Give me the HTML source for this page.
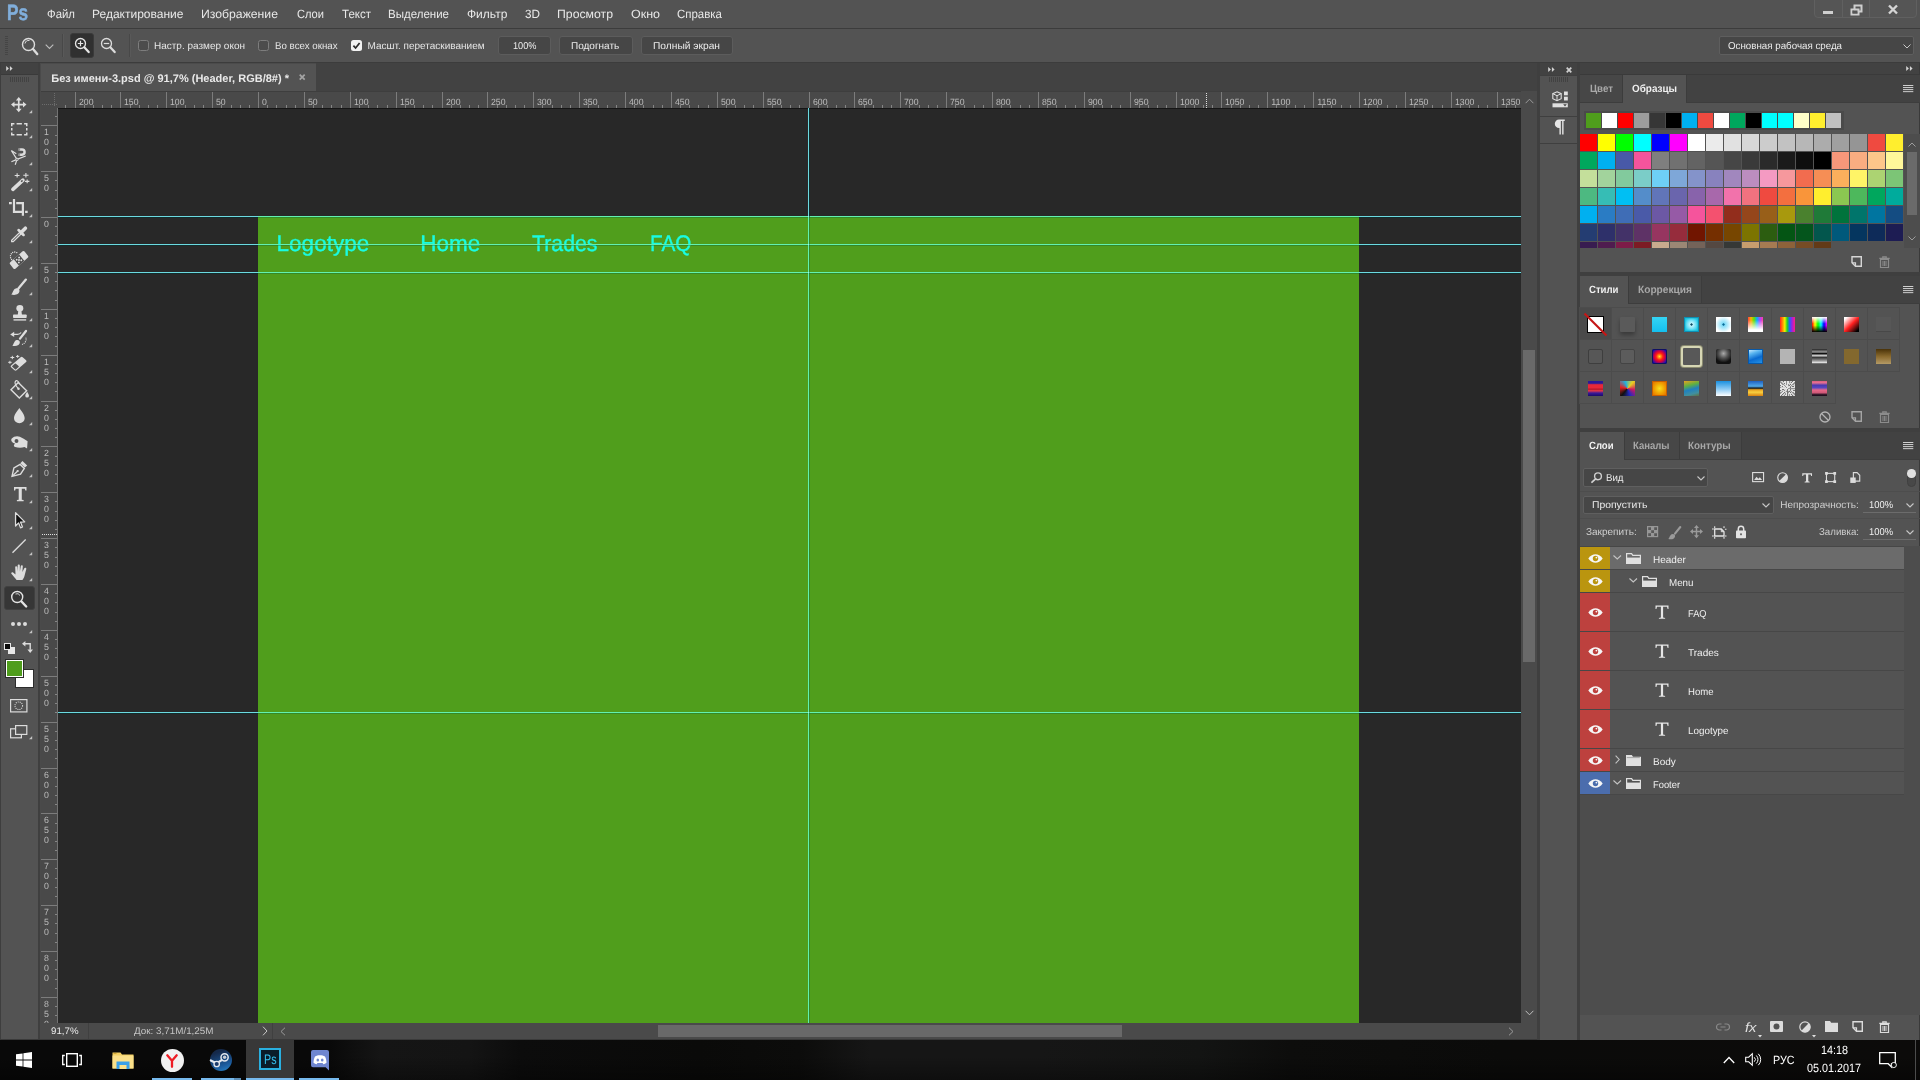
<!DOCTYPE html>
<html lang="ru">
<head>
<meta charset="utf-8">
<title>Adobe Photoshop</title>
<style>
*{box-sizing:border-box;margin:0;padding:0}
html,body{width:1920px;height:1080px;overflow:hidden;background:#535353;font-family:"Liberation Sans",sans-serif;font-size:12px;color:#e4e4e4}
.a{position:absolute}
.t{position:absolute;white-space:nowrap;line-height:1;text-rendering:geometricPrecision}
svg{position:absolute;overflow:visible}
</style>
</head>
<body>
<div id="app" style="position:absolute;left:0;top:0;width:1920px;height:1080px;overflow:hidden;will-change:transform">
<div class="a" style="left:0px;top:0px;width:1920px;height:28px;background:#535353;"></div>
<div class="t" style="left:6.80px;top:2px;font-size:22px;color:#80aedb;font-weight:bold;transform:scaleX(0.7804);transform-origin:0 0;-webkit-text-stroke:0.5px #80aedb;">Ps</div>
<div class="t" style="left:47.00px;top:8px;font-size:12px;color:#e8e8e8;transform:scaleX(0.9491);transform-origin:0 0;">Файл</div>
<div class="t" style="left:92.00px;top:8px;font-size:12px;color:#e8e8e8;">Редактирование</div>
<div class="t" style="left:201.00px;top:8px;font-size:12px;color:#e8e8e8;transform:scaleX(1.0186);transform-origin:0 0;">Изображение</div>
<div class="t" style="left:297.00px;top:8px;font-size:12px;color:#e8e8e8;transform:scaleX(0.9253);transform-origin:0 0;">Слои</div>
<div class="t" style="left:342.00px;top:8px;font-size:12px;color:#e8e8e8;transform:scaleX(0.9599);transform-origin:0 0;">Текст</div>
<div class="t" style="left:388.00px;top:8px;font-size:12px;color:#e8e8e8;transform:scaleX(0.9593);transform-origin:0 0;">Выделение</div>
<div class="t" style="left:467.00px;top:8px;font-size:12px;color:#e8e8e8;">Фильтр</div>
<div class="t" style="left:525.00px;top:8px;font-size:12px;color:#e8e8e8;transform:scaleX(0.9778);transform-origin:0 0;">3D</div>
<div class="t" style="left:557.00px;top:8px;font-size:12px;color:#e8e8e8;transform:scaleX(1.0218);transform-origin:0 0;">Просмотр</div>
<div class="t" style="left:631.00px;top:8px;font-size:12px;color:#e8e8e8;transform:scaleX(1.0400);transform-origin:0 0;">Окно</div>
<div class="t" style="left:677.00px;top:8px;font-size:12px;color:#e8e8e8;transform:scaleX(0.9559);transform-origin:0 0;">Справка</div>
<div class="a" style="left:1814px;top:-1px;width:103px;height:19px;border:1px solid #606060;border-radius:0 0 4px 4px;background:#555"></div>
<div class="a" style="left:1842px;top:0px;width:1px;height:17px;background:#606060;"></div>
<div class="a" style="left:1869px;top:0px;width:1px;height:17px;background:#606060;"></div>
<div class="a" style="left:1823px;top:11px;width:10px;height:3px;background:#cfcfcf;"></div>
<svg style="left:1850px;top:4px;" width="13" height="12" viewBox="0 0 13 12"><path d="M4.5 1.5h7v6h-7z M1.5 5.5h7v5h-7z" fill="none" stroke="#cfcfcf" stroke-width="2"/><rect x="2.5" y="6.5" width="5" height="3" fill="#555"/></svg>
<svg style="left:1888px;top:5px;" width="10" height="9" viewBox="0 0 10 9"><path d="M1 0.5L9 8.5M9 0.5L1 8.5" stroke="#d4d4d4" stroke-width="2.4"/></svg>
<div class="a" style="left:0px;top:28px;width:1920px;height:1px;background:#3c3c3c;"></div>
<div class="a" style="left:0px;top:29px;width:1920px;height:33px;background:#535353;"></div>
<div class="a" style="left:0px;top:62px;width:1920px;height:1px;background:#3c3c3c;"></div>
<div class="a" style="left:5px;top:36px;width:3px;height:20px;background:repeating-linear-gradient(#454545 0 1px,transparent 1px 2px)"></div>
<svg style="left:20.3px;top:35px;" width="20" height="22" viewBox="0 0 20 22"><circle cx="8.5" cy="9.5" r="6" fill="none" stroke="#dcdcdc" stroke-width="1.4"/><path d="M5 8.5a4 4 0 0 1 4.5-3" fill="none" stroke="#dcdcdc" stroke-width="1"/><path d="M13 14l4.2 5" stroke="#dcdcdc" stroke-width="2.4" stroke-linecap="round"/></svg>
<svg style="left:45px;top:44px;" width="9" height="6" viewBox="0 0 9 6"><path d="M0.7 0.7L4.5 4.5L8.3 0.7" fill="none" stroke="#bdbdbd" stroke-width="1.1"/></svg>
<div class="a" style="left:62px;top:34px;width:1px;height:23px;background:#484848;"></div>
<div class="a" style="left:63px;top:34px;width:1px;height:23px;background:#595959;"></div>
<div class="a" style="left:70px;top:33px;width:24px;height:25px;background:#303030;border-radius:3px;border:1px solid #3a3a3a"></div>
<svg style="left:74.3px;top:37.2px;" width="18" height="18" viewBox="0 0 18 18"><circle cx="6.5" cy="6.5" r="5" fill="none" stroke="#e6e6e6" stroke-width="1.3"/><path d="M3.8 6.5h5.4M6.5 3.8v5.4" stroke="#e6e6e6" stroke-width="1.2"/><path d="M10.5 10.5l4.2 4.6" stroke="#e6e6e6" stroke-width="2.2" stroke-linecap="round"/></svg>
<svg style="left:100.3px;top:37.2px;" width="18" height="18" viewBox="0 0 18 18"><circle cx="6.5" cy="6.5" r="5" fill="none" stroke="#dcdcdc" stroke-width="1.3"/><path d="M3.8 6.5h5.4" stroke="#dcdcdc" stroke-width="1.2"/><path d="M10.5 10.5l4.2 4.6" stroke="#dcdcdc" stroke-width="2.2" stroke-linecap="round"/></svg>
<div class="a" style="left:129px;top:34px;width:1px;height:23px;background:#484848;"></div>
<div class="a" style="left:130px;top:34px;width:1px;height:23px;background:#595959;"></div>
<div class="a" style="left:138px;top:39.5px;width:11px;height:11px;border:1px solid #7d7d7d;border-radius:2.5px;background:#4c4c4c"></div>
<div class="a" style="left:258px;top:39.5px;width:11px;height:11px;border:1px solid #7d7d7d;border-radius:2.5px;background:#4c4c4c"></div>
<div class="a" style="left:351px;top:39.5px;width:11px;height:11px;border-radius:2.5px;background:#f2f2f2"></div>
<svg style="left:351px;top:39.5px;" width="11" height="11" viewBox="0 0 11 11"><path d="M2.4 5.6l2.2 2.4l4-5" fill="none" stroke="#2a2a2a" stroke-width="1.7"/></svg>
<div class="t" style="left:154.00px;top:42px;font-size:10px;color:#e6e6e6;">Настр. размер окон</div>
<div class="t" style="left:274.50px;top:42px;font-size:10px;color:#e6e6e6;transform:scaleX(0.9712);transform-origin:0 0;">Во всех окнах</div>
<div class="t" style="left:367.50px;top:42px;font-size:10px;color:#e6e6e6;">Масшт. перетаскиванием</div>
<div class="a" style="left:498px;top:36px;width:53px;height:19px;background:#464646;border:1px solid #5c5c5c;border-radius:3px"></div>
<div class="t" style="left:513.00px;top:42px;font-size:10px;color:#ececec;transform:scaleX(0.9188);transform-origin:0 0;">100%</div>
<div class="a" style="left:559px;top:36px;width:74px;height:19px;background:#464646;border:1px solid #5c5c5c;border-radius:3px"></div>
<div class="t" style="left:571.00px;top:42px;font-size:10px;color:#ececec;">Подогнать</div>
<div class="a" style="left:641px;top:36px;width:92px;height:19px;background:#464646;border:1px solid #5c5c5c;border-radius:3px"></div>
<div class="t" style="left:653.00px;top:42px;font-size:10px;color:#ececec;transform:scaleX(1.0219);transform-origin:0 0;">Полный экран</div>
<div class="a" style="left:1719px;top:36px;width:195px;height:19px;background:#464646;border:1px solid #5e5e5e;border-radius:2px"></div>
<div class="t" style="left:1728.00px;top:42px;font-size:10px;color:#ececec;transform:scaleX(0.9751);transform-origin:0 0;">Основная рабочая среда</div>
<svg style="left:1902.5px;top:44px;" width="8" height="5" viewBox="0 0 8 5"><path d="M0.5 0.5L4 4L7.5 0.5" fill="none" stroke="#c8c8c8" stroke-width="1"/></svg>
<div class="a" style="left:38px;top:63px;width:1499px;height:28px;background:#424242;"></div>
<div class="a" style="left:41px;top:64px;width:275px;height:27px;background:#535353;"></div>
<div class="a" style="left:41px;top:63px;width:275px;height:1px;background:#4b4b4b;"></div>
<div class="t" style="left:51.30px;top:74px;font-size:11px;color:#e9e9e9;font-weight:bold;">Без имени-3.psd @ 91,7% (Header, RGB/8#) *</div>
<svg style="left:299px;top:74.2px;" width="6.4" height="6.4" viewBox="0 0 6.4 6.4"><path d="M0.7 0.7L5.7 5.7M5.7 0.7L0.7 5.7" stroke="#a4a4a4" stroke-width="1.7"/></svg>
<div class="a" style="left:0px;top:63px;width:38px;height:977px;background:#535353;"></div>
<div class="a" style="left:0px;top:63px;width:38px;height:11px;background:#424242;"></div>
<div class="a" style="left:0px;top:74px;width:38px;height:1px;background:#3a3a3a;"></div>
<div class="a" style="left:0px;top:63px;width:1px;height:977px;background:#3e3e3e;"></div>
<svg style="left:5.8px;top:66.2px;" width="7" height="5" viewBox="0 0 7 5"><path d="M0.2 0.1L2.9 2.5L0.2 4.9zM3.9 0.1L6.600 2.5L3.9 4.9z" fill="#d4d4d4"/></svg>
<div class="a" style="left:10px;top:77px;width:20px;height:5px;background:repeating-linear-gradient(90deg,#424242 0 1px,transparent 1px 2px)"></div>
<div class="a" style="left:38px;top:63px;width:3px;height:977px;background:#3f3f3f;"></div>
<div class="a" style="left:40px;top:63px;width:1px;height:977px;background:#4a4a4a;"></div>
<svg style="left:11px;top:97px" width="15.5" height="15.2" viewBox="0 0 15.5 15.2" preserveAspectRatio="none"><path d="M7.75 2.6v10M2.7 7.6h10.1" fill="none" stroke="#dddddd" vector-effect="non-scaling-stroke" stroke-width="1.7"/><path d="M7.75 0l2.9 3.5h-5.8zM7.75 15.2l2.9-3.5h-5.8zM0 7.6l3.5-2.9v5.8zM15.5 7.6l-3.5-2.9v5.8z" fill="#dddddd"/></svg>
<svg style="left:29.2px;top:110.1px;" width="3.2" height="3.2" viewBox="0 0 3.2 3.2"><path d="M3.2 0V3.2H0z" fill="#c4c4c4"/></svg>
<svg style="left:11px;top:123px" width="16.5" height="12.6" viewBox="0 0 16.5 12.6" preserveAspectRatio="none"><path d="M0.75 3.2V0.75H3.4M5.6 0.75H10.9M13.1 0.75H15.75V3.2M15.75 5.1V7.5M15.75 9.4V11.85H13.1M10.9 11.85H5.6M3.4 11.85H0.75V9.4M0.75 7.5V5.1" fill="none" stroke="#dddddd" vector-effect="non-scaling-stroke" stroke-width="1.5"/></svg>
<svg style="left:29.2px;top:135.1px;" width="3.2" height="3.2" viewBox="0 0 3.2 3.2"><path d="M3.2 0V3.2H0z" fill="#c4c4c4"/></svg>
<svg style="left:11px;top:148px" width="16" height="17" viewBox="0 0 16 17" preserveAspectRatio="none"><path d="M0.3 2.5l5.7 8.9M0.3 2.5l5 3.2M6 11.4l-5.600 2.4M6 11.4l-1.800 5.400M6 11.4l8.700-3.400" fill="none" stroke="#dddddd" vector-effect="non-scaling-stroke" stroke-width="1.200"/><rect x="5" y="10.400" width="2" height="2" fill="#535353" stroke="#dddddd" vector-effect="non-scaling-stroke" stroke-width="0.800"/><path d="M11 0.300h-3.400v2.400h3.400a1.400 1.400 0 0 1 0 2.800h-3.400v2.400h3.400a3.800 3.800 0 0 0 0-7.600z" fill="#dddddd"/><path d="M8.600 0.300v2.400M8.600 5.500v2.400" stroke="#535353" vector-effect="non-scaling-stroke" stroke-width="0.600"/></svg>
<svg style="left:29.2px;top:161.6px;" width="3.2" height="3.2" viewBox="0 0 3.2 3.2"><path d="M3.2 0V3.2H0z" fill="#c4c4c4"/></svg>
<svg style="left:11px;top:173px" width="18.4" height="18" viewBox="2.7 0.8 17.4 19.5" preserveAspectRatio="none"><path d="M4.500 18.500l9.500-10" stroke="#dddddd" vector-effect="non-scaling-stroke" stroke-width="3.600" stroke-linecap="round"/><path d="M12.300 10.200l1.300-1.400" stroke="#535353" vector-effect="non-scaling-stroke" stroke-width="1.400"/><path d="M8.500 1.200v4.600M6.200 3.500h4.600M16.800 0.800v5M14.300 3.300h5M18 7.800v4.200M15.900 9.900h4.200" fill="none" stroke="#dddddd" vector-effect="non-scaling-stroke" stroke-width="1.100"/></svg>
<svg style="left:29.2px;top:187.6px;" width="3.2" height="3.2" viewBox="0 0 3.2 3.2"><path d="M3.2 0V3.2H0z" fill="#c4c4c4"/></svg>
<svg style="left:9px;top:198.9px" width="18.7" height="16.7" viewBox="0 0 18.7 16.7" preserveAspectRatio="none"><path d="M3.9 0h2.2v14.1h-2.2zM3.9 11.8h11.1v2.3h-11.1zM16.1 11.8h2.6v2.3h-2.6zM0 3h2.8v2.2h-2.8zM7.2 3h7.8v2.2h-7.8zM12.8 3h2.2v13.7h-2.2z" fill="#dddddd"/></svg>
<svg style="left:29.2px;top:213.6px;" width="3.2" height="3.2" viewBox="0 0 3.2 3.2"><path d="M3.2 0V3.2H0z" fill="#c4c4c4"/></svg>
<svg style="left:11px;top:225.6px" width="16.2" height="16.4" viewBox="3.5 1.9 16.1 16.6" preserveAspectRatio="none"><path d="M4.2 17.8l1.5 0l8-8l-1.500-1.500l-8 8z" fill="none" stroke="#dddddd" vector-effect="non-scaling-stroke" stroke-width="1.300"/><path d="M11 6l5 5" stroke="#dddddd" vector-effect="non-scaling-stroke" stroke-width="2.600" stroke-linecap="round"/><path d="M13.500 8.500l4.300-4.300" stroke="#dddddd" vector-effect="non-scaling-stroke" stroke-width="3.600" stroke-linecap="round"/></svg>
<svg style="left:29.2px;top:239.6px;" width="3.2" height="3.2" viewBox="0 0 3.2 3.2"><path d="M3.2 0V3.2H0z" fill="#c4c4c4"/></svg>
<svg style="left:10px;top:251px" width="18" height="18" viewBox="1.5 2 19 18" preserveAspectRatio="none"><g transform="rotate(-40 11 11)"><rect x="1" y="6.800" width="20" height="8.400" rx="1.500" fill="#dddddd"/><rect x="7.300" y="6.800" width="7.400" height="8.400" fill="#4a4a4a"/><circle cx="9.300" cy="9.200" r="1" fill="#dddddd"/><circle cx="12.700" cy="9.200" r="1" fill="#dddddd"/><circle cx="9.300" cy="12.800" r="1" fill="#dddddd"/><circle cx="12.700" cy="12.800" r="1" fill="#dddddd"/><circle cx="11" cy="11" r="1" fill="#dddddd"/></g><path d="M3.200 10.500a4.300 4.300 0 0 1 6.300-6.200" fill="none" stroke="#dddddd" vector-effect="non-scaling-stroke" stroke-width="1.300" stroke-dasharray="0.100 1.900" stroke-linecap="round"/></svg>
<svg style="left:29.2px;top:265.6px;" width="3.2" height="3.2" viewBox="0 0 3.2 3.2"><path d="M3.2 0V3.2H0z" fill="#c4c4c4"/></svg>
<svg style="left:11px;top:278.5px" width="15.3" height="16" viewBox="0 0 15.3 16" preserveAspectRatio="none"><path d="M14.900 0.600L7.400 9.500" stroke="#dddddd" vector-effect="non-scaling-stroke" stroke-width="2.300" stroke-linecap="round"/><path d="M0.300 15.500C1.500 14.500 1.800 12.500 3 10.800C4.200 9.200 6.500 8.800 7.800 10C9 11.300 8.600 13.500 7 14.800C5 16.200 2 16 0.300 15.500z" fill="#dddddd"/></svg>
<svg style="left:29.2px;top:291.6px;" width="3.2" height="3.2" viewBox="0 0 3.2 3.2"><path d="M3.2 0V3.2H0z" fill="#c4c4c4"/></svg>
<svg style="left:12.5px;top:305px" width="13.7" height="15.6" viewBox="4.5 2.7 13 16" preserveAspectRatio="none"><circle cx="11" cy="6" r="3.3" fill="#dddddd"/><path d="M9.600 8h2.800l.6 5h-4z" fill="#dddddd"/><rect x="4.500" y="12.500" width="13" height="3.500" rx="0.800" fill="#dddddd"/><rect x="5" y="17.300" width="12" height="1.400" fill="#dddddd"/></svg>
<svg style="left:29.2px;top:317.6px;" width="3.2" height="3.2" viewBox="0 0 3.2 3.2"><path d="M3.2 0V3.2H0z" fill="#c4c4c4"/></svg>
<svg style="left:10px;top:330px" width="17.2" height="16.3" viewBox="0 0 17.2 16.3" preserveAspectRatio="none"><path d="M16 1L10 8.600" stroke="#dddddd" vector-effect="non-scaling-stroke" stroke-width="2.300" stroke-linecap="round"/><path d="M2.300 15.700C3.400 14.800 3.600 13 4.700 11.500C5.800 10 8 9.600 9.200 10.800C10.400 12 9.900 14 8.400 15.100C6.600 16.300 3.900 16.200 2.300 15.700z" fill="#dddddd"/><path d="M3 4.300h4.500c1.800 0 2.800-.7 3.600-1.800" fill="none" stroke="#dddddd" vector-effect="non-scaling-stroke" stroke-width="1.200"/><path d="M0.200 4.600l4-2.900v5.400z" fill="#dddddd"/><path d="M12.500 14.300a5.500 5.500 0 0 0 3.500-6.300" fill="none" stroke="#dddddd" vector-effect="non-scaling-stroke" stroke-width="1.200" stroke-dasharray="0.100 1.800" stroke-linecap="round"/></svg>
<svg style="left:29.2px;top:343.6px;" width="3.2" height="3.2" viewBox="0 0 3.2 3.2"><path d="M3.2 0V3.2H0z" fill="#c4c4c4"/></svg>
<svg style="left:8.2px;top:355.4px" width="18.8" height="15.8" viewBox="1 0.5 19.5 19" preserveAspectRatio="none"><g transform="rotate(-45 12 11)"><rect x="3.500" y="7" width="17" height="8" rx="1.500" fill="#dddddd"/><rect x="4.700" y="8.200" width="5.300" height="5.600" rx="0.800" fill="#535353"/></g><path d="M5.500 1.500v4M3.500 3.500h4M11 0.500v3.400M9.300 2.200h3.400M3 7.500v3.600M1.200 9.300h3.600" fill="none" stroke="#dddddd" vector-effect="non-scaling-stroke" stroke-width="1"/></svg>
<svg style="left:29.2px;top:369.6px;" width="3.2" height="3.2" viewBox="0 0 3.2 3.2"><path d="M3.2 0V3.2H0z" fill="#c4c4c4"/></svg>
<svg style="left:11px;top:381px" width="18" height="17" viewBox="3 2 17.3 16.5" preserveAspectRatio="none"><path d="M10 3.500l8 8l-7 7l-8-8z" fill="none" stroke="#dddddd" vector-effect="non-scaling-stroke" stroke-width="1.400"/><path d="M10 9.500c-2.500-3-4-6-2.500-7.500c1.200-1 2.800.5 3.500 2.500" fill="none" stroke="#dddddd" vector-effect="non-scaling-stroke" stroke-width="1.200"/><circle cx="10.200" cy="9.500" r="1.200" fill="#dddddd"/><path d="M18.500 12.500c1 1.800 1.800 2.800 1.800 3.800a1.800 1.800 0 0 1-3.600 0c0-1 .8-2 1.800-3.800z" fill="#dddddd"/></svg>
<svg style="left:29.2px;top:395.6px;" width="3.2" height="3.2" viewBox="0 0 3.2 3.2"><path d="M3.2 0V3.2H0z" fill="#c4c4c4"/></svg>
<svg style="left:13.7px;top:408px" width="10.7" height="15.2" viewBox="6 2.5 10 15.3" preserveAspectRatio="none"><path d="M11 2.500c2.500 4 5 6.800 5 10.300a5 5 0 0 1-10 0c0-3.500 2.500-6.300 5-10.300z" fill="#dddddd"/></svg>
<svg style="left:29.2px;top:421.6px;" width="3.2" height="3.2" viewBox="0 0 3.2 3.2"><path d="M3.2 0V3.2H0z" fill="#c4c4c4"/></svg>
<svg style="left:10.6px;top:435.6px" width="16.6" height="12.6" viewBox="2.5 3.8 16 12.2" preserveAspectRatio="none"><path d="M3 6.500c2-2.500 5.500-3 8-2c2.500 1 5 2.500 7.500 4.500l-.5 7l-2.500-1.500c-2.500.8-6 .8-9 0c-1.800-.8-1.300-2.800 0-3.300c-2.300-.5-4.500-2.500-3.500-4.700z" fill="#dddddd"/><circle cx="7.800" cy="8.600" r="1.900" fill="#535353"/></svg>
<svg style="left:29.2px;top:447.6px;" width="3.2" height="3.2" viewBox="0 0 3.2 3.2"><path d="M3.2 0V3.2H0z" fill="#c4c4c4"/></svg>
<svg style="left:12px;top:460.6px" width="15.2" height="15.4" viewBox="4 2.2 16 17.3" preserveAspectRatio="none"><path d="M4 19.500l2-9.500l6.500-4l4.500 4.500l-4 6.500z" fill="none" stroke="#dddddd" vector-effect="non-scaling-stroke" stroke-width="1.400"/><path d="M4.500 19l5-5" fill="none" stroke="#dddddd" vector-effect="non-scaling-stroke" stroke-width="1.200"/><circle cx="10" cy="13.500" r="1.200" fill="#dddddd"/><path d="M12.800 4.600l2.200-2.400l5 5l-2.400 2.200z" fill="#dddddd"/></svg>
<svg style="left:29.2px;top:473.6px;" width="3.2" height="3.2" viewBox="0 0 3.2 3.2"><path d="M3.2 0V3.2H0z" fill="#c4c4c4"/></svg>
<svg style="left:13.7px;top:487px" width="12.5" height="14.2" viewBox="4.5 4 13 14" preserveAspectRatio="none"><path d="M4.500 4h13v3.500h-1.200l-.5-1.700h-3.200v10.700l1.900.4v1.100h-7v-1.100l1.900-.4v-10.700h-3.200l-.5 1.700h-1.200z" fill="#dddddd"/></svg>
<svg style="left:29.2px;top:499.6px;" width="3.2" height="3.2" viewBox="0 0 3.2 3.2"><path d="M3.2 0V3.2H0z" fill="#c4c4c4"/></svg>
<svg style="left:14.7px;top:512px" width="10.3" height="16.5" viewBox="6.3 2.3 12.4 17.9" preserveAspectRatio="none"><path d="M7 3v14.500l3.600-3.400l2.400 5.400l2.300-1l-2.400-5.300l5.100-.2z" fill="#111" stroke="#dddddd" vector-effect="non-scaling-stroke" stroke-width="1.300" stroke-linejoin="round"/></svg>
<svg style="left:29.2px;top:525.6px;" width="3.2" height="3.2" viewBox="0 0 3.2 3.2"><path d="M3.2 0V3.2H0z" fill="#c4c4c4"/></svg>
<svg style="left:12px;top:538.7px" width="14.2" height="14.3" viewBox="4 4 14 14.5" preserveAspectRatio="none"><path d="M4.500 18l13-13.500" fill="none" stroke="#dddddd" vector-effect="non-scaling-stroke" stroke-width="1.300"/></svg>
<svg style="left:29.2px;top:551.6px;" width="3.2" height="3.2" viewBox="0 0 3.2 3.2"><path d="M3.2 0V3.2H0z" fill="#c4c4c4"/></svg>
<svg style="left:11px;top:564px" width="16.5" height="16" viewBox="0 0 16.5 16" preserveAspectRatio="none"><path d="M5.600 16C4.200 14.200 2 11.600 0.400 9.700C-0.300 8.800 1 7.600 2.100 8.500L4.500 10.500L4.200 3.200C4.200 1.900 6.100 1.800 6.200 3.100L6.500 7.500L6.700 1.500C6.800 0.200 8.800 0.200 8.800 1.500L8.900 7.500L9.800 2C10 0.800 11.900 1 11.800 2.300L11.400 8L13.300 4.300C13.800 3.200 15.600 3.800 15.300 5L13.600 11.500C13.100 13.500 12.400 14.800 11.400 16z" fill="#dddddd"/></svg>
<svg style="left:29.2px;top:577.6px;" width="3.2" height="3.2" viewBox="0 0 3.2 3.2"><path d="M3.2 0V3.2H0z" fill="#c4c4c4"/></svg>
<div class="a" style="left:4px;top:586px;width:30.500px;height:23.500px;background:#363636;border-radius:3px;border:1px solid #404040"></div>
<svg style="left:9px;top:589px;" width="20" height="20" viewBox="0 0 20 20"><circle cx="8.200" cy="8" r="5.500" fill="none" stroke="#e4e4e4" stroke-width="1.400"/><path d="M6.500 5a3.500 3.500 0 0 1 4.500 1.500" fill="none" stroke="#e4e4e4" stroke-width="0.900"/><path d="M12.500 12.500l4.700 5" stroke="#e4e4e4" stroke-width="2.400" stroke-linecap="round"/></svg>
<div class="a" style="left:10.8px;top:622px;width:4.400px;height:4.400px;border-radius:50%;background:#dcdcdc"></div>
<div class="a" style="left:16.8px;top:622px;width:4.400px;height:4.400px;border-radius:50%;background:#dcdcdc"></div>
<div class="a" style="left:22.8px;top:622px;width:4.400px;height:4.400px;border-radius:50%;background:#dcdcdc"></div>
<svg style="left:29.2px;top:629.6px;" width="3.2" height="3.2" viewBox="0 0 3.2 3.2"><path d="M3.2 0V3.2H0z" fill="#c4c4c4"/></svg>
<div class="a" style="left:8px;top:647px;width:6.5px;height:6.5px;background:#e8e8e8;"></div>
<div class="a" style="left:4px;top:643px;width:7px;height:7px;background:#0a0a0a;border:1px solid #e8e8e8"></div>
<svg style="left:22px;top:641px;" width="11" height="12" viewBox="0 0 11 12"><path d="M3 2.800h5.200v6" fill="none" stroke="#dcdcdc" stroke-width="1.400"/><path d="M0 2.800l3.400-2.800v5.600zM8.200 12l-2.800-3.600h5.600z" fill="#dcdcdc"/></svg>
<div class="a" style="left:14.5px;top:668.5px;width:19px;height:19px;background:#ffffff;border:1px solid #2c2c2c"></div>
<div class="a" style="left:4.5px;top:658.5px;width:19px;height:19px;background:#4f9d1c;border:1px solid #2c2c2c;box-shadow:inset 0 0 0 1px #fff"></div>
<svg style="left:10px;top:699px;" width="17.5" height="13.5" viewBox="0 0 17.5 13.5"><rect x="0.600" y="0.600" width="16.300" height="12.300" fill="none" stroke="#dcdcdc" stroke-width="1.200"/><circle cx="8.750" cy="6.750" r="3.800" fill="none" stroke="#dcdcdc" stroke-width="1.100" stroke-dasharray="1 1.050"/></svg>
<svg style="left:10px;top:725px;" width="17.5" height="13.5" viewBox="0 0 17.5 13.5"><rect x="0.600" y="3.800" width="10.800" height="9" fill="none" stroke="#dcdcdc" stroke-width="1.200"/><rect x="5.600" y="0.600" width="11.200" height="8.800" fill="#535353" stroke="#dcdcdc" stroke-width="1.200"/></svg>
<svg style="left:29.2px;top:736px;" width="3.2" height="3.2" viewBox="0 0 3.2 3.2"><path d="M3.2 0V3.2H0z" fill="#c4c4c4"/></svg>
<div class="a" style="left:41px;top:91px;width:1496px;height:17px;background:#494949;"></div>
<div class="a" style="left:0;top:0;width:1521px;height:108px;overflow:hidden"><div class="a" style="left:65px;top:105px;width:1px;height:3px;background:#858585;"></div><div class="a" style="left:75px;top:92px;width:1px;height:16px;background:#7c7c7c;"></div><div class="a" style="left:84px;top:105px;width:1px;height:3px;background:#858585;"></div><div class="a" style="left:93px;top:105px;width:1px;height:3px;background:#858585;"></div><div class="a" style="left:102px;top:105px;width:1px;height:3px;background:#858585;"></div><div class="a" style="left:111px;top:105px;width:1px;height:3px;background:#858585;"></div><div class="a" style="left:120px;top:92px;width:1px;height:16px;background:#7c7c7c;"></div><div class="a" style="left:130px;top:105px;width:1px;height:3px;background:#858585;"></div><div class="a" style="left:139px;top:105px;width:1px;height:3px;background:#858585;"></div><div class="a" style="left:148px;top:105px;width:1px;height:3px;background:#858585;"></div><div class="a" style="left:157px;top:105px;width:1px;height:3px;background:#858585;"></div><div class="a" style="left:166px;top:92px;width:1px;height:16px;background:#7c7c7c;"></div><div class="a" style="left:176px;top:105px;width:1px;height:3px;background:#858585;"></div><div class="a" style="left:185px;top:105px;width:1px;height:3px;background:#858585;"></div><div class="a" style="left:194px;top:105px;width:1px;height:3px;background:#858585;"></div><div class="a" style="left:203px;top:105px;width:1px;height:3px;background:#858585;"></div><div class="a" style="left:212px;top:92px;width:1px;height:16px;background:#7c7c7c;"></div><div class="a" style="left:221px;top:105px;width:1px;height:3px;background:#858585;"></div><div class="a" style="left:231px;top:105px;width:1px;height:3px;background:#858585;"></div><div class="a" style="left:240px;top:105px;width:1px;height:3px;background:#858585;"></div><div class="a" style="left:249px;top:105px;width:1px;height:3px;background:#858585;"></div><div class="a" style="left:258px;top:92px;width:1px;height:16px;background:#7c7c7c;"></div><div class="a" style="left:267px;top:105px;width:1px;height:3px;background:#858585;"></div><div class="a" style="left:276px;top:105px;width:1px;height:3px;background:#858585;"></div><div class="a" style="left:286px;top:105px;width:1px;height:3px;background:#858585;"></div><div class="a" style="left:295px;top:105px;width:1px;height:3px;background:#858585;"></div><div class="a" style="left:304px;top:92px;width:1px;height:16px;background:#7c7c7c;"></div><div class="a" style="left:313px;top:105px;width:1px;height:3px;background:#858585;"></div><div class="a" style="left:322px;top:105px;width:1px;height:3px;background:#858585;"></div><div class="a" style="left:331px;top:105px;width:1px;height:3px;background:#858585;"></div><div class="a" style="left:341px;top:105px;width:1px;height:3px;background:#858585;"></div><div class="a" style="left:350px;top:92px;width:1px;height:16px;background:#7c7c7c;"></div><div class="a" style="left:359px;top:105px;width:1px;height:3px;background:#858585;"></div><div class="a" style="left:368px;top:105px;width:1px;height:3px;background:#858585;"></div><div class="a" style="left:377px;top:105px;width:1px;height:3px;background:#858585;"></div><div class="a" style="left:387px;top:105px;width:1px;height:3px;background:#858585;"></div><div class="a" style="left:396px;top:92px;width:1px;height:16px;background:#7c7c7c;"></div><div class="a" style="left:405px;top:105px;width:1px;height:3px;background:#858585;"></div><div class="a" style="left:414px;top:105px;width:1px;height:3px;background:#858585;"></div><div class="a" style="left:423px;top:105px;width:1px;height:3px;background:#858585;"></div><div class="a" style="left:432px;top:105px;width:1px;height:3px;background:#858585;"></div><div class="a" style="left:442px;top:92px;width:1px;height:16px;background:#7c7c7c;"></div><div class="a" style="left:451px;top:105px;width:1px;height:3px;background:#858585;"></div><div class="a" style="left:460px;top:105px;width:1px;height:3px;background:#858585;"></div><div class="a" style="left:469px;top:105px;width:1px;height:3px;background:#858585;"></div><div class="a" style="left:478px;top:105px;width:1px;height:3px;background:#858585;"></div><div class="a" style="left:487px;top:92px;width:1px;height:16px;background:#7c7c7c;"></div><div class="a" style="left:497px;top:105px;width:1px;height:3px;background:#858585;"></div><div class="a" style="left:506px;top:105px;width:1px;height:3px;background:#858585;"></div><div class="a" style="left:515px;top:105px;width:1px;height:3px;background:#858585;"></div><div class="a" style="left:524px;top:105px;width:1px;height:3px;background:#858585;"></div><div class="a" style="left:533px;top:92px;width:1px;height:16px;background:#7c7c7c;"></div><div class="a" style="left:542px;top:105px;width:1px;height:3px;background:#858585;"></div><div class="a" style="left:552px;top:105px;width:1px;height:3px;background:#858585;"></div><div class="a" style="left:561px;top:105px;width:1px;height:3px;background:#858585;"></div><div class="a" style="left:570px;top:105px;width:1px;height:3px;background:#858585;"></div><div class="a" style="left:579px;top:92px;width:1px;height:16px;background:#7c7c7c;"></div><div class="a" style="left:588px;top:105px;width:1px;height:3px;background:#858585;"></div><div class="a" style="left:598px;top:105px;width:1px;height:3px;background:#858585;"></div><div class="a" style="left:607px;top:105px;width:1px;height:3px;background:#858585;"></div><div class="a" style="left:616px;top:105px;width:1px;height:3px;background:#858585;"></div><div class="a" style="left:625px;top:92px;width:1px;height:16px;background:#7c7c7c;"></div><div class="a" style="left:634px;top:105px;width:1px;height:3px;background:#858585;"></div><div class="a" style="left:643px;top:105px;width:1px;height:3px;background:#858585;"></div><div class="a" style="left:653px;top:105px;width:1px;height:3px;background:#858585;"></div><div class="a" style="left:662px;top:105px;width:1px;height:3px;background:#858585;"></div><div class="a" style="left:671px;top:92px;width:1px;height:16px;background:#7c7c7c;"></div><div class="a" style="left:680px;top:105px;width:1px;height:3px;background:#858585;"></div><div class="a" style="left:689px;top:105px;width:1px;height:3px;background:#858585;"></div><div class="a" style="left:698px;top:105px;width:1px;height:3px;background:#858585;"></div><div class="a" style="left:708px;top:105px;width:1px;height:3px;background:#858585;"></div><div class="a" style="left:717px;top:92px;width:1px;height:16px;background:#7c7c7c;"></div><div class="a" style="left:726px;top:105px;width:1px;height:3px;background:#858585;"></div><div class="a" style="left:735px;top:105px;width:1px;height:3px;background:#858585;"></div><div class="a" style="left:744px;top:105px;width:1px;height:3px;background:#858585;"></div><div class="a" style="left:753px;top:105px;width:1px;height:3px;background:#858585;"></div><div class="a" style="left:763px;top:92px;width:1px;height:16px;background:#7c7c7c;"></div><div class="a" style="left:772px;top:105px;width:1px;height:3px;background:#858585;"></div><div class="a" style="left:781px;top:105px;width:1px;height:3px;background:#858585;"></div><div class="a" style="left:790px;top:105px;width:1px;height:3px;background:#858585;"></div><div class="a" style="left:799px;top:105px;width:1px;height:3px;background:#858585;"></div><div class="a" style="left:809px;top:92px;width:1px;height:16px;background:#7c7c7c;"></div><div class="a" style="left:818px;top:105px;width:1px;height:3px;background:#858585;"></div><div class="a" style="left:827px;top:105px;width:1px;height:3px;background:#858585;"></div><div class="a" style="left:836px;top:105px;width:1px;height:3px;background:#858585;"></div><div class="a" style="left:845px;top:105px;width:1px;height:3px;background:#858585;"></div><div class="a" style="left:854px;top:92px;width:1px;height:16px;background:#7c7c7c;"></div><div class="a" style="left:864px;top:105px;width:1px;height:3px;background:#858585;"></div><div class="a" style="left:873px;top:105px;width:1px;height:3px;background:#858585;"></div><div class="a" style="left:882px;top:105px;width:1px;height:3px;background:#858585;"></div><div class="a" style="left:891px;top:105px;width:1px;height:3px;background:#858585;"></div><div class="a" style="left:900px;top:92px;width:1px;height:16px;background:#7c7c7c;"></div><div class="a" style="left:909px;top:105px;width:1px;height:3px;background:#858585;"></div><div class="a" style="left:919px;top:105px;width:1px;height:3px;background:#858585;"></div><div class="a" style="left:928px;top:105px;width:1px;height:3px;background:#858585;"></div><div class="a" style="left:937px;top:105px;width:1px;height:3px;background:#858585;"></div><div class="a" style="left:946px;top:92px;width:1px;height:16px;background:#7c7c7c;"></div><div class="a" style="left:955px;top:105px;width:1px;height:3px;background:#858585;"></div><div class="a" style="left:964px;top:105px;width:1px;height:3px;background:#858585;"></div><div class="a" style="left:974px;top:105px;width:1px;height:3px;background:#858585;"></div><div class="a" style="left:983px;top:105px;width:1px;height:3px;background:#858585;"></div><div class="a" style="left:992px;top:92px;width:1px;height:16px;background:#7c7c7c;"></div><div class="a" style="left:1001px;top:105px;width:1px;height:3px;background:#858585;"></div><div class="a" style="left:1010px;top:105px;width:1px;height:3px;background:#858585;"></div><div class="a" style="left:1020px;top:105px;width:1px;height:3px;background:#858585;"></div><div class="a" style="left:1029px;top:105px;width:1px;height:3px;background:#858585;"></div><div class="a" style="left:1038px;top:92px;width:1px;height:16px;background:#7c7c7c;"></div><div class="a" style="left:1047px;top:105px;width:1px;height:3px;background:#858585;"></div><div class="a" style="left:1056px;top:105px;width:1px;height:3px;background:#858585;"></div><div class="a" style="left:1065px;top:105px;width:1px;height:3px;background:#858585;"></div><div class="a" style="left:1075px;top:105px;width:1px;height:3px;background:#858585;"></div><div class="a" style="left:1084px;top:92px;width:1px;height:16px;background:#7c7c7c;"></div><div class="a" style="left:1093px;top:105px;width:1px;height:3px;background:#858585;"></div><div class="a" style="left:1102px;top:105px;width:1px;height:3px;background:#858585;"></div><div class="a" style="left:1111px;top:105px;width:1px;height:3px;background:#858585;"></div><div class="a" style="left:1120px;top:105px;width:1px;height:3px;background:#858585;"></div><div class="a" style="left:1130px;top:92px;width:1px;height:16px;background:#7c7c7c;"></div><div class="a" style="left:1139px;top:105px;width:1px;height:3px;background:#858585;"></div><div class="a" style="left:1148px;top:105px;width:1px;height:3px;background:#858585;"></div><div class="a" style="left:1157px;top:105px;width:1px;height:3px;background:#858585;"></div><div class="a" style="left:1166px;top:105px;width:1px;height:3px;background:#858585;"></div><div class="a" style="left:1176px;top:92px;width:1px;height:16px;background:#7c7c7c;"></div><div class="a" style="left:1185px;top:105px;width:1px;height:3px;background:#858585;"></div><div class="a" style="left:1194px;top:105px;width:1px;height:3px;background:#858585;"></div><div class="a" style="left:1203px;top:105px;width:1px;height:3px;background:#858585;"></div><div class="a" style="left:1212px;top:105px;width:1px;height:3px;background:#858585;"></div><div class="a" style="left:1221px;top:92px;width:1px;height:16px;background:#7c7c7c;"></div><div class="a" style="left:1231px;top:105px;width:1px;height:3px;background:#858585;"></div><div class="a" style="left:1240px;top:105px;width:1px;height:3px;background:#858585;"></div><div class="a" style="left:1249px;top:105px;width:1px;height:3px;background:#858585;"></div><div class="a" style="left:1258px;top:105px;width:1px;height:3px;background:#858585;"></div><div class="a" style="left:1267px;top:92px;width:1px;height:16px;background:#7c7c7c;"></div><div class="a" style="left:1276px;top:105px;width:1px;height:3px;background:#858585;"></div><div class="a" style="left:1286px;top:105px;width:1px;height:3px;background:#858585;"></div><div class="a" style="left:1295px;top:105px;width:1px;height:3px;background:#858585;"></div><div class="a" style="left:1304px;top:105px;width:1px;height:3px;background:#858585;"></div><div class="a" style="left:1313px;top:92px;width:1px;height:16px;background:#7c7c7c;"></div><div class="a" style="left:1322px;top:105px;width:1px;height:3px;background:#858585;"></div><div class="a" style="left:1331px;top:105px;width:1px;height:3px;background:#858585;"></div><div class="a" style="left:1341px;top:105px;width:1px;height:3px;background:#858585;"></div><div class="a" style="left:1350px;top:105px;width:1px;height:3px;background:#858585;"></div><div class="a" style="left:1359px;top:92px;width:1px;height:16px;background:#7c7c7c;"></div><div class="a" style="left:1368px;top:105px;width:1px;height:3px;background:#858585;"></div><div class="a" style="left:1377px;top:105px;width:1px;height:3px;background:#858585;"></div><div class="a" style="left:1387px;top:105px;width:1px;height:3px;background:#858585;"></div><div class="a" style="left:1396px;top:105px;width:1px;height:3px;background:#858585;"></div><div class="a" style="left:1405px;top:92px;width:1px;height:16px;background:#7c7c7c;"></div><div class="a" style="left:1414px;top:105px;width:1px;height:3px;background:#858585;"></div><div class="a" style="left:1423px;top:105px;width:1px;height:3px;background:#858585;"></div><div class="a" style="left:1432px;top:105px;width:1px;height:3px;background:#858585;"></div><div class="a" style="left:1442px;top:105px;width:1px;height:3px;background:#858585;"></div><div class="a" style="left:1451px;top:92px;width:1px;height:16px;background:#7c7c7c;"></div><div class="a" style="left:1460px;top:105px;width:1px;height:3px;background:#858585;"></div><div class="a" style="left:1469px;top:105px;width:1px;height:3px;background:#858585;"></div><div class="a" style="left:1478px;top:105px;width:1px;height:3px;background:#858585;"></div><div class="a" style="left:1487px;top:105px;width:1px;height:3px;background:#858585;"></div><div class="a" style="left:1497px;top:92px;width:1px;height:16px;background:#7c7c7c;"></div><div class="a" style="left:1506px;top:105px;width:1px;height:3px;background:#858585;"></div><div class="a" style="left:1515px;top:105px;width:1px;height:3px;background:#858585;"></div><div class="t" style="left:79.20px;top:98px;font-size:9px;color:#bcbcbc;transform:scaleX(0.9689);transform-origin:0 0;">200</div><div class="t" style="left:124.20px;top:98px;font-size:9px;color:#bcbcbc;transform:scaleX(0.9689);transform-origin:0 0;">150</div><div class="t" style="left:170.20px;top:98px;font-size:9px;color:#bcbcbc;transform:scaleX(0.9689);transform-origin:0 0;">100</div><div class="t" style="left:216.20px;top:98px;font-size:9px;color:#bcbcbc;transform:scaleX(0.9689);transform-origin:0 0;">50</div><div class="t" style="left:262.20px;top:98px;font-size:9px;color:#bcbcbc;transform:scaleX(0.9689);transform-origin:0 0;">0</div><div class="t" style="left:308.20px;top:98px;font-size:9px;color:#bcbcbc;transform:scaleX(0.9689);transform-origin:0 0;">50</div><div class="t" style="left:354.20px;top:98px;font-size:9px;color:#bcbcbc;transform:scaleX(0.9689);transform-origin:0 0;">100</div><div class="t" style="left:400.20px;top:98px;font-size:9px;color:#bcbcbc;transform:scaleX(0.9689);transform-origin:0 0;">150</div><div class="t" style="left:446.20px;top:98px;font-size:9px;color:#bcbcbc;transform:scaleX(0.9689);transform-origin:0 0;">200</div><div class="t" style="left:491.20px;top:98px;font-size:9px;color:#bcbcbc;transform:scaleX(0.9689);transform-origin:0 0;">250</div><div class="t" style="left:537.20px;top:98px;font-size:9px;color:#bcbcbc;transform:scaleX(0.9689);transform-origin:0 0;">300</div><div class="t" style="left:583.20px;top:98px;font-size:9px;color:#bcbcbc;transform:scaleX(0.9689);transform-origin:0 0;">350</div><div class="t" style="left:629.20px;top:98px;font-size:9px;color:#bcbcbc;transform:scaleX(0.9689);transform-origin:0 0;">400</div><div class="t" style="left:675.20px;top:98px;font-size:9px;color:#bcbcbc;transform:scaleX(0.9689);transform-origin:0 0;">450</div><div class="t" style="left:721.20px;top:98px;font-size:9px;color:#bcbcbc;transform:scaleX(0.9689);transform-origin:0 0;">500</div><div class="t" style="left:767.20px;top:98px;font-size:9px;color:#bcbcbc;transform:scaleX(0.9689);transform-origin:0 0;">550</div><div class="t" style="left:813.20px;top:98px;font-size:9px;color:#bcbcbc;transform:scaleX(0.9689);transform-origin:0 0;">600</div><div class="t" style="left:858.20px;top:98px;font-size:9px;color:#bcbcbc;transform:scaleX(0.9689);transform-origin:0 0;">650</div><div class="t" style="left:904.20px;top:98px;font-size:9px;color:#bcbcbc;transform:scaleX(0.9689);transform-origin:0 0;">700</div><div class="t" style="left:950.20px;top:98px;font-size:9px;color:#bcbcbc;transform:scaleX(0.9689);transform-origin:0 0;">750</div><div class="t" style="left:996.20px;top:98px;font-size:9px;color:#bcbcbc;transform:scaleX(0.9689);transform-origin:0 0;">800</div><div class="t" style="left:1042.20px;top:98px;font-size:9px;color:#bcbcbc;transform:scaleX(0.9689);transform-origin:0 0;">850</div><div class="t" style="left:1088.20px;top:98px;font-size:9px;color:#bcbcbc;transform:scaleX(0.9689);transform-origin:0 0;">900</div><div class="t" style="left:1134.20px;top:98px;font-size:9px;color:#bcbcbc;transform:scaleX(0.9689);transform-origin:0 0;">950</div><div class="t" style="left:1180.20px;top:98px;font-size:9px;color:#bcbcbc;transform:scaleX(0.9689);transform-origin:0 0;">1000</div><div class="t" style="left:1225.20px;top:98px;font-size:9px;color:#bcbcbc;transform:scaleX(0.9689);transform-origin:0 0;">1050</div><div class="t" style="left:1271.20px;top:98px;font-size:9px;color:#bcbcbc;">1100</div><div class="t" style="left:1317.20px;top:98px;font-size:9px;color:#bcbcbc;">1150</div><div class="t" style="left:1363.20px;top:98px;font-size:9px;color:#bcbcbc;transform:scaleX(0.9689);transform-origin:0 0;">1200</div><div class="t" style="left:1409.20px;top:98px;font-size:9px;color:#bcbcbc;transform:scaleX(0.9689);transform-origin:0 0;">1250</div><div class="t" style="left:1455.20px;top:98px;font-size:9px;color:#bcbcbc;transform:scaleX(0.9689);transform-origin:0 0;">1300</div><div class="t" style="left:1501.20px;top:98px;font-size:9px;color:#bcbcbc;transform:scaleX(0.9689);transform-origin:0 0;">1350</div></div>
<div class="a" style="left:41px;top:91px;width:17px;height:17px;background:#494949;"></div>
<div class="a" style="left:41px;top:91px;width:1496px;height:1px;background:#3e3e3e;"></div>
<div class="a" style="left:54px;top:93px;width:1px;height:14px;background:repeating-linear-gradient(#6c6c6c 0 1px,transparent 1px 2px)"></div>
<div class="a" style="left:42px;top:104px;width:15px;height:1px;background:repeating-linear-gradient(90deg,#6c6c6c 0 1px,transparent 1px 2px)"></div>
<div class="a" style="left:1206px;top:93px;width:1px;height:15px;background:repeating-linear-gradient(#e0e0e0 0 1px,transparent 1px 2px)"></div>
<div class="a" style="left:41px;top:108px;width:17px;height:915px;background:#494949;"></div>
<div class="a" style="left:0;top:108px;width:58px;height:915px;overflow:hidden"><div class="a" style="left:0;top:-108px"><div class="a" style="left:55px;top:116px;width:3px;height:1px;background:#858585;"></div><div class="a" style="left:41px;top:125px;width:17px;height:1px;background:#7c7c7c;"></div><div class="a" style="left:55px;top:135px;width:3px;height:1px;background:#858585;"></div><div class="a" style="left:55px;top:144px;width:3px;height:1px;background:#858585;"></div><div class="a" style="left:55px;top:153px;width:3px;height:1px;background:#858585;"></div><div class="a" style="left:55px;top:162px;width:3px;height:1px;background:#858585;"></div><div class="a" style="left:41px;top:171px;width:17px;height:1px;background:#7c7c7c;"></div><div class="a" style="left:55px;top:180px;width:3px;height:1px;background:#858585;"></div><div class="a" style="left:55px;top:190px;width:3px;height:1px;background:#858585;"></div><div class="a" style="left:55px;top:199px;width:3px;height:1px;background:#858585;"></div><div class="a" style="left:55px;top:208px;width:3px;height:1px;background:#858585;"></div><div class="a" style="left:41px;top:217px;width:17px;height:1px;background:#7c7c7c;"></div><div class="a" style="left:55px;top:226px;width:3px;height:1px;background:#858585;"></div><div class="a" style="left:55px;top:235px;width:3px;height:1px;background:#858585;"></div><div class="a" style="left:55px;top:245px;width:3px;height:1px;background:#858585;"></div><div class="a" style="left:55px;top:254px;width:3px;height:1px;background:#858585;"></div><div class="a" style="left:41px;top:263px;width:17px;height:1px;background:#7c7c7c;"></div><div class="a" style="left:55px;top:272px;width:3px;height:1px;background:#858585;"></div><div class="a" style="left:55px;top:281px;width:3px;height:1px;background:#858585;"></div><div class="a" style="left:55px;top:290px;width:3px;height:1px;background:#858585;"></div><div class="a" style="left:55px;top:300px;width:3px;height:1px;background:#858585;"></div><div class="a" style="left:41px;top:309px;width:17px;height:1px;background:#7c7c7c;"></div><div class="a" style="left:55px;top:318px;width:3px;height:1px;background:#858585;"></div><div class="a" style="left:55px;top:327px;width:3px;height:1px;background:#858585;"></div><div class="a" style="left:55px;top:336px;width:3px;height:1px;background:#858585;"></div><div class="a" style="left:55px;top:346px;width:3px;height:1px;background:#858585;"></div><div class="a" style="left:41px;top:355px;width:17px;height:1px;background:#7c7c7c;"></div><div class="a" style="left:55px;top:364px;width:3px;height:1px;background:#858585;"></div><div class="a" style="left:55px;top:373px;width:3px;height:1px;background:#858585;"></div><div class="a" style="left:55px;top:382px;width:3px;height:1px;background:#858585;"></div><div class="a" style="left:55px;top:391px;width:3px;height:1px;background:#858585;"></div><div class="a" style="left:41px;top:401px;width:17px;height:1px;background:#7c7c7c;"></div><div class="a" style="left:55px;top:410px;width:3px;height:1px;background:#858585;"></div><div class="a" style="left:55px;top:419px;width:3px;height:1px;background:#858585;"></div><div class="a" style="left:55px;top:428px;width:3px;height:1px;background:#858585;"></div><div class="a" style="left:55px;top:437px;width:3px;height:1px;background:#858585;"></div><div class="a" style="left:41px;top:446px;width:17px;height:1px;background:#7c7c7c;"></div><div class="a" style="left:55px;top:456px;width:3px;height:1px;background:#858585;"></div><div class="a" style="left:55px;top:465px;width:3px;height:1px;background:#858585;"></div><div class="a" style="left:55px;top:474px;width:3px;height:1px;background:#858585;"></div><div class="a" style="left:55px;top:483px;width:3px;height:1px;background:#858585;"></div><div class="a" style="left:41px;top:492px;width:17px;height:1px;background:#7c7c7c;"></div><div class="a" style="left:55px;top:501px;width:3px;height:1px;background:#858585;"></div><div class="a" style="left:55px;top:511px;width:3px;height:1px;background:#858585;"></div><div class="a" style="left:55px;top:520px;width:3px;height:1px;background:#858585;"></div><div class="a" style="left:55px;top:529px;width:3px;height:1px;background:#858585;"></div><div class="a" style="left:41px;top:538px;width:17px;height:1px;background:#7c7c7c;"></div><div class="a" style="left:55px;top:547px;width:3px;height:1px;background:#858585;"></div><div class="a" style="left:55px;top:557px;width:3px;height:1px;background:#858585;"></div><div class="a" style="left:55px;top:566px;width:3px;height:1px;background:#858585;"></div><div class="a" style="left:55px;top:575px;width:3px;height:1px;background:#858585;"></div><div class="a" style="left:41px;top:584px;width:17px;height:1px;background:#7c7c7c;"></div><div class="a" style="left:55px;top:593px;width:3px;height:1px;background:#858585;"></div><div class="a" style="left:55px;top:602px;width:3px;height:1px;background:#858585;"></div><div class="a" style="left:55px;top:612px;width:3px;height:1px;background:#858585;"></div><div class="a" style="left:55px;top:621px;width:3px;height:1px;background:#858585;"></div><div class="a" style="left:41px;top:630px;width:17px;height:1px;background:#7c7c7c;"></div><div class="a" style="left:55px;top:639px;width:3px;height:1px;background:#858585;"></div><div class="a" style="left:55px;top:648px;width:3px;height:1px;background:#858585;"></div><div class="a" style="left:55px;top:657px;width:3px;height:1px;background:#858585;"></div><div class="a" style="left:55px;top:667px;width:3px;height:1px;background:#858585;"></div><div class="a" style="left:41px;top:676px;width:17px;height:1px;background:#7c7c7c;"></div><div class="a" style="left:55px;top:685px;width:3px;height:1px;background:#858585;"></div><div class="a" style="left:55px;top:694px;width:3px;height:1px;background:#858585;"></div><div class="a" style="left:55px;top:703px;width:3px;height:1px;background:#858585;"></div><div class="a" style="left:55px;top:712px;width:3px;height:1px;background:#858585;"></div><div class="a" style="left:41px;top:722px;width:17px;height:1px;background:#7c7c7c;"></div><div class="a" style="left:55px;top:731px;width:3px;height:1px;background:#858585;"></div><div class="a" style="left:55px;top:740px;width:3px;height:1px;background:#858585;"></div><div class="a" style="left:55px;top:749px;width:3px;height:1px;background:#858585;"></div><div class="a" style="left:55px;top:758px;width:3px;height:1px;background:#858585;"></div><div class="a" style="left:41px;top:768px;width:17px;height:1px;background:#7c7c7c;"></div><div class="a" style="left:55px;top:777px;width:3px;height:1px;background:#858585;"></div><div class="a" style="left:55px;top:786px;width:3px;height:1px;background:#858585;"></div><div class="a" style="left:55px;top:795px;width:3px;height:1px;background:#858585;"></div><div class="a" style="left:55px;top:804px;width:3px;height:1px;background:#858585;"></div><div class="a" style="left:41px;top:813px;width:17px;height:1px;background:#7c7c7c;"></div><div class="a" style="left:55px;top:823px;width:3px;height:1px;background:#858585;"></div><div class="a" style="left:55px;top:832px;width:3px;height:1px;background:#858585;"></div><div class="a" style="left:55px;top:841px;width:3px;height:1px;background:#858585;"></div><div class="a" style="left:55px;top:850px;width:3px;height:1px;background:#858585;"></div><div class="a" style="left:41px;top:859px;width:17px;height:1px;background:#7c7c7c;"></div><div class="a" style="left:55px;top:868px;width:3px;height:1px;background:#858585;"></div><div class="a" style="left:55px;top:878px;width:3px;height:1px;background:#858585;"></div><div class="a" style="left:55px;top:887px;width:3px;height:1px;background:#858585;"></div><div class="a" style="left:55px;top:896px;width:3px;height:1px;background:#858585;"></div><div class="a" style="left:41px;top:905px;width:17px;height:1px;background:#7c7c7c;"></div><div class="a" style="left:55px;top:914px;width:3px;height:1px;background:#858585;"></div><div class="a" style="left:55px;top:923px;width:3px;height:1px;background:#858585;"></div><div class="a" style="left:55px;top:933px;width:3px;height:1px;background:#858585;"></div><div class="a" style="left:55px;top:942px;width:3px;height:1px;background:#858585;"></div><div class="a" style="left:41px;top:951px;width:17px;height:1px;background:#7c7c7c;"></div><div class="a" style="left:55px;top:960px;width:3px;height:1px;background:#858585;"></div><div class="a" style="left:55px;top:969px;width:3px;height:1px;background:#858585;"></div><div class="a" style="left:55px;top:979px;width:3px;height:1px;background:#858585;"></div><div class="a" style="left:55px;top:988px;width:3px;height:1px;background:#858585;"></div><div class="a" style="left:41px;top:997px;width:17px;height:1px;background:#7c7c7c;"></div><div class="a" style="left:55px;top:1006px;width:3px;height:1px;background:#858585;"></div><div class="a" style="left:55px;top:1015px;width:3px;height:1px;background:#858585;"></div><div class="t" style="left:44.20px;top:128px;font-size:9px;color:#bcbcbc;transform:scaleX(0.9789);transform-origin:0 0;">1</div><div class="t" style="left:44.20px;top:138px;font-size:9px;color:#bcbcbc;transform:scaleX(0.9789);transform-origin:0 0;">0</div><div class="t" style="left:44.20px;top:148px;font-size:9px;color:#bcbcbc;transform:scaleX(0.9789);transform-origin:0 0;">0</div><div class="t" style="left:44.20px;top:174px;font-size:9px;color:#bcbcbc;transform:scaleX(0.9789);transform-origin:0 0;">5</div><div class="t" style="left:44.20px;top:184px;font-size:9px;color:#bcbcbc;transform:scaleX(0.9789);transform-origin:0 0;">0</div><div class="t" style="left:44.20px;top:220px;font-size:9px;color:#bcbcbc;transform:scaleX(0.9789);transform-origin:0 0;">0</div><div class="t" style="left:44.20px;top:266px;font-size:9px;color:#bcbcbc;transform:scaleX(0.9789);transform-origin:0 0;">5</div><div class="t" style="left:44.20px;top:276px;font-size:9px;color:#bcbcbc;transform:scaleX(0.9789);transform-origin:0 0;">0</div><div class="t" style="left:44.20px;top:312px;font-size:9px;color:#bcbcbc;transform:scaleX(0.9789);transform-origin:0 0;">1</div><div class="t" style="left:44.20px;top:322px;font-size:9px;color:#bcbcbc;transform:scaleX(0.9789);transform-origin:0 0;">0</div><div class="t" style="left:44.20px;top:332px;font-size:9px;color:#bcbcbc;transform:scaleX(0.9789);transform-origin:0 0;">0</div><div class="t" style="left:44.20px;top:358px;font-size:9px;color:#bcbcbc;transform:scaleX(0.9789);transform-origin:0 0;">1</div><div class="t" style="left:44.20px;top:368px;font-size:9px;color:#bcbcbc;transform:scaleX(0.9789);transform-origin:0 0;">5</div><div class="t" style="left:44.20px;top:378px;font-size:9px;color:#bcbcbc;transform:scaleX(0.9789);transform-origin:0 0;">0</div><div class="t" style="left:44.20px;top:404px;font-size:9px;color:#bcbcbc;transform:scaleX(0.9789);transform-origin:0 0;">2</div><div class="t" style="left:44.20px;top:414px;font-size:9px;color:#bcbcbc;transform:scaleX(0.9789);transform-origin:0 0;">0</div><div class="t" style="left:44.20px;top:424px;font-size:9px;color:#bcbcbc;transform:scaleX(0.9789);transform-origin:0 0;">0</div><div class="t" style="left:44.20px;top:449px;font-size:9px;color:#bcbcbc;transform:scaleX(0.9789);transform-origin:0 0;">2</div><div class="t" style="left:44.20px;top:459px;font-size:9px;color:#bcbcbc;transform:scaleX(0.9789);transform-origin:0 0;">5</div><div class="t" style="left:44.20px;top:469px;font-size:9px;color:#bcbcbc;transform:scaleX(0.9789);transform-origin:0 0;">0</div><div class="t" style="left:44.20px;top:495px;font-size:9px;color:#bcbcbc;transform:scaleX(0.9789);transform-origin:0 0;">3</div><div class="t" style="left:44.20px;top:505px;font-size:9px;color:#bcbcbc;transform:scaleX(0.9789);transform-origin:0 0;">0</div><div class="t" style="left:44.20px;top:515px;font-size:9px;color:#bcbcbc;transform:scaleX(0.9789);transform-origin:0 0;">0</div><div class="t" style="left:44.20px;top:541px;font-size:9px;color:#bcbcbc;transform:scaleX(0.9789);transform-origin:0 0;">3</div><div class="t" style="left:44.20px;top:551px;font-size:9px;color:#bcbcbc;transform:scaleX(0.9789);transform-origin:0 0;">5</div><div class="t" style="left:44.20px;top:561px;font-size:9px;color:#bcbcbc;transform:scaleX(0.9789);transform-origin:0 0;">0</div><div class="t" style="left:44.20px;top:587px;font-size:9px;color:#bcbcbc;transform:scaleX(0.9789);transform-origin:0 0;">4</div><div class="t" style="left:44.20px;top:597px;font-size:9px;color:#bcbcbc;transform:scaleX(0.9789);transform-origin:0 0;">0</div><div class="t" style="left:44.20px;top:607px;font-size:9px;color:#bcbcbc;transform:scaleX(0.9789);transform-origin:0 0;">0</div><div class="t" style="left:44.20px;top:633px;font-size:9px;color:#bcbcbc;transform:scaleX(0.9789);transform-origin:0 0;">4</div><div class="t" style="left:44.20px;top:643px;font-size:9px;color:#bcbcbc;transform:scaleX(0.9789);transform-origin:0 0;">5</div><div class="t" style="left:44.20px;top:653px;font-size:9px;color:#bcbcbc;transform:scaleX(0.9789);transform-origin:0 0;">0</div><div class="t" style="left:44.20px;top:679px;font-size:9px;color:#bcbcbc;transform:scaleX(0.9789);transform-origin:0 0;">5</div><div class="t" style="left:44.20px;top:689px;font-size:9px;color:#bcbcbc;transform:scaleX(0.9789);transform-origin:0 0;">0</div><div class="t" style="left:44.20px;top:699px;font-size:9px;color:#bcbcbc;transform:scaleX(0.9789);transform-origin:0 0;">0</div><div class="t" style="left:44.20px;top:725px;font-size:9px;color:#bcbcbc;transform:scaleX(0.9789);transform-origin:0 0;">5</div><div class="t" style="left:44.20px;top:735px;font-size:9px;color:#bcbcbc;transform:scaleX(0.9789);transform-origin:0 0;">5</div><div class="t" style="left:44.20px;top:745px;font-size:9px;color:#bcbcbc;transform:scaleX(0.9789);transform-origin:0 0;">0</div><div class="t" style="left:44.20px;top:771px;font-size:9px;color:#bcbcbc;transform:scaleX(0.9789);transform-origin:0 0;">6</div><div class="t" style="left:44.20px;top:781px;font-size:9px;color:#bcbcbc;transform:scaleX(0.9789);transform-origin:0 0;">0</div><div class="t" style="left:44.20px;top:791px;font-size:9px;color:#bcbcbc;transform:scaleX(0.9789);transform-origin:0 0;">0</div><div class="t" style="left:44.20px;top:816px;font-size:9px;color:#bcbcbc;transform:scaleX(0.9789);transform-origin:0 0;">6</div><div class="t" style="left:44.20px;top:826px;font-size:9px;color:#bcbcbc;transform:scaleX(0.9789);transform-origin:0 0;">5</div><div class="t" style="left:44.20px;top:836px;font-size:9px;color:#bcbcbc;transform:scaleX(0.9789);transform-origin:0 0;">0</div><div class="t" style="left:44.20px;top:862px;font-size:9px;color:#bcbcbc;transform:scaleX(0.9789);transform-origin:0 0;">7</div><div class="t" style="left:44.20px;top:872px;font-size:9px;color:#bcbcbc;transform:scaleX(0.9789);transform-origin:0 0;">0</div><div class="t" style="left:44.20px;top:882px;font-size:9px;color:#bcbcbc;transform:scaleX(0.9789);transform-origin:0 0;">0</div><div class="t" style="left:44.20px;top:908px;font-size:9px;color:#bcbcbc;transform:scaleX(0.9789);transform-origin:0 0;">7</div><div class="t" style="left:44.20px;top:918px;font-size:9px;color:#bcbcbc;transform:scaleX(0.9789);transform-origin:0 0;">5</div><div class="t" style="left:44.20px;top:928px;font-size:9px;color:#bcbcbc;transform:scaleX(0.9789);transform-origin:0 0;">0</div><div class="t" style="left:44.20px;top:954px;font-size:9px;color:#bcbcbc;transform:scaleX(0.9789);transform-origin:0 0;">8</div><div class="t" style="left:44.20px;top:964px;font-size:9px;color:#bcbcbc;transform:scaleX(0.9789);transform-origin:0 0;">0</div><div class="t" style="left:44.20px;top:974px;font-size:9px;color:#bcbcbc;transform:scaleX(0.9789);transform-origin:0 0;">0</div><div class="t" style="left:44.20px;top:1000px;font-size:9px;color:#bcbcbc;transform:scaleX(0.9789);transform-origin:0 0;">8</div><div class="t" style="left:44.20px;top:1010px;font-size:9px;color:#bcbcbc;transform:scaleX(0.9789);transform-origin:0 0;">5</div><div class="t" style="left:44.20px;top:1020px;font-size:9px;color:#bcbcbc;transform:scaleX(0.9789);transform-origin:0 0;">0</div></div></div>
<div class="a" style="left:42px;top:534px;width:15px;height:1px;background:repeating-linear-gradient(90deg,#e0e0e0 0 1px,transparent 1px 2px)"></div>
<div class="a" style="left:57px;top:108px;width:1px;height:915px;background:#727272;"></div>
<div class="a" style="left:58px;top:108px;width:1463px;height:915px;background:#282828;overflow:hidden"><div class="a" style="left:0px;top:0px;width:1463px;height:1px;background:#161616;"></div><div class="a" style="left:200px;top:109px;width:1101px;height:807px;background:#509e1c;"></div><div class="t" style="left:218.60px;top:125px;font-size:22.5px;color:#19fce2;-webkit-text-stroke:0.35px #19fce2;">Logotype</div><div class="t" style="left:362.30px;top:125px;font-size:22.5px;color:#19fce2;-webkit-text-stroke:0.35px #19fce2;">Home</div><div class="t" style="left:474.30px;top:125px;font-size:22.5px;color:#19fce2;transform:scaleX(0.9466);transform-origin:0 0;-webkit-text-stroke:0.35px #19fce2;">Trades</div><div class="t" style="left:592.30px;top:125px;font-size:22.5px;color:#19fce2;transform:scaleX(0.9220);transform-origin:0 0;-webkit-text-stroke:0.35px #19fce2;">FAQ</div><div class="a" style="left:0px;top:108px;width:1463px;height:1px;background:#6cd9e0;"></div><div class="a" style="left:0px;top:109px;width:200px;height:1px;background:rgba(0,48,48,.55);"></div><div class="a" style="left:1301px;top:109px;width:162px;height:1px;background:rgba(0,48,48,.55);"></div><div class="a" style="left:200px;top:108px;width:1101px;height:1px;background:#62f0b0;"></div><div class="a" style="left:200px;top:109px;width:1101px;height:1px;background:rgba(0,90,60,.32);"></div><div class="a" style="left:0px;top:136px;width:1463px;height:1px;background:#6cd9e0;"></div><div class="a" style="left:0px;top:137px;width:200px;height:1px;background:rgba(0,48,48,.55);"></div><div class="a" style="left:1301px;top:137px;width:162px;height:1px;background:rgba(0,48,48,.55);"></div><div class="a" style="left:200px;top:136px;width:1101px;height:1px;background:#62f0b0;"></div><div class="a" style="left:200px;top:137px;width:1101px;height:1px;background:rgba(0,90,60,.32);"></div><div class="a" style="left:0px;top:164px;width:1463px;height:1px;background:#6cd9e0;"></div><div class="a" style="left:0px;top:165px;width:200px;height:1px;background:rgba(0,48,48,.55);"></div><div class="a" style="left:1301px;top:165px;width:162px;height:1px;background:rgba(0,48,48,.55);"></div><div class="a" style="left:200px;top:164px;width:1101px;height:1px;background:#62f0b0;"></div><div class="a" style="left:200px;top:165px;width:1101px;height:1px;background:rgba(0,90,60,.32);"></div><div class="a" style="left:0px;top:604px;width:1463px;height:1px;background:#6cd9e0;"></div><div class="a" style="left:0px;top:605px;width:200px;height:1px;background:rgba(0,48,48,.55);"></div><div class="a" style="left:1301px;top:605px;width:162px;height:1px;background:rgba(0,48,48,.55);"></div><div class="a" style="left:200px;top:604px;width:1101px;height:1px;background:#62f0b0;"></div><div class="a" style="left:200px;top:605px;width:1101px;height:1px;background:rgba(0,90,60,.32);"></div><div class="a" style="left:750px;top:0px;width:1px;height:915px;background:#6cd9e0;"></div><div class="a" style="left:751px;top:0px;width:1px;height:109px;background:rgba(0,48,48,.55);"></div><div class="a" style="left:750px;top:109px;width:1px;height:806px;background:#62f0b0;"></div><div class="a" style="left:751px;top:109px;width:1px;height:806px;background:rgba(0,90,60,.32);"></div><div class="a" style="left:750px;top:108px;width:1px;height:1px;background:#a8f4f0;"></div><div class="a" style="left:750px;top:136px;width:1px;height:1px;background:#a8f4f0;"></div><div class="a" style="left:750px;top:164px;width:1px;height:1px;background:#a8f4f0;"></div><div class="a" style="left:750px;top:604px;width:1px;height:1px;background:#a8f4f0;"></div></div>
<div class="a" style="left:1521px;top:91px;width:16px;height:932px;background:#4a4a4a;"></div>
<svg style="left:1524.5px;top:98px;" width="9" height="6" viewBox="0 0 9 6"><path d="M0.600 5.200L4.500 1.200L8.400 5.200" fill="none" stroke="#9a9a9a" stroke-width="1"/></svg>
<svg style="left:1524.5px;top:1010px;" width="9" height="6" viewBox="0 0 9 6"><path d="M0.600 0.800L4.500 4.800L8.400 0.800" fill="none" stroke="#c0c0c0" stroke-width="1"/></svg>
<div class="a" style="left:1523px;top:350px;width:12px;height:312px;background:#696969;"></div>
<div class="a" style="left:41px;top:1023px;width:1496px;height:16px;background:#4a4a4a;"></div>
<div class="a" style="left:0px;top:1039px;width:1920px;height:1px;background:#3a3a3a;"></div>
<div class="t" style="left:51.00px;top:1027px;font-size:9.5px;color:#ececec;transform:scaleX(1.0209);transform-origin:0 0;">91,7%</div>
<div class="a" style="left:88px;top:1023px;width:1px;height:16px;background:#404040;"></div>
<div class="a" style="left:272px;top:1023px;width:1px;height:16px;background:#404040;"></div>
<div class="t" style="left:134.00px;top:1027px;font-size:9.5px;color:#c4c4c4;transform:scaleX(1.0365);transform-origin:0 0;">Док: 3,71M/1,25M</div>
<svg style="left:262px;top:1026px;" width="6" height="10" viewBox="0 0 6 10"><path d="M1 0.700L5 5L1 9.300" fill="none" stroke="#c8c8c8" stroke-width="1"/></svg>
<svg style="left:280px;top:1027px;" width="6" height="9" viewBox="0 0 6 9"><path d="M5 0.700L1 4.500L5 8.300" fill="none" stroke="#9a9a9a" stroke-width="1"/></svg>
<svg style="left:1508px;top:1027px;" width="6" height="9" viewBox="0 0 6 9"><path d="M1 0.700L5 4.500L1 8.300" fill="none" stroke="#9a9a9a" stroke-width="1"/></svg>
<div class="a" style="left:658px;top:1025px;width:464px;height:12px;background:#696969;"></div>
<div class="a" style="left:1537px;top:63px;width:3px;height:977px;background:#3f3f3f;"></div>
<div class="a" style="left:1540px;top:63px;width:37px;height:977px;background:#535353;"></div>
<div class="a" style="left:1540px;top:63px;width:37px;height:12px;background:#424242;"></div>
<div class="a" style="left:1540px;top:75px;width:37px;height:1px;background:#3f3f3f;"></div>
<svg style="left:1548px;top:67.3px;" width="7" height="5" viewBox="0 0 7 5"><path d="M0.200 0.100L2.900 2.500L0.200 4.900zM3.900 0.100L6.600 2.500L3.900 4.900z" fill="#d4d4d4"/></svg>
<svg style="left:1566px;top:67px;" width="6" height="6" viewBox="0 0 6 6"><path d="M0.700 0.700L5.300 5.300M5.300 0.700L0.700 5.300" stroke="#d0d0d0" stroke-width="1.700"/></svg>
<div class="a" style="left:1549px;top:77px;width:20px;height:5px;background:repeating-linear-gradient(90deg,#424242 0 1px,transparent 1px 2px)"></div>
<svg style="left:1551.5px;top:90.5px;" width="16" height="17" viewBox="0 0 16 17"><path d="M5 0.800l4.200 1.900v5l-4.200 2l-4.200-2v-5z" fill="none" stroke="#e0e0e0" stroke-width="1.100"/><path d="M0.800 2.700l4.200 2l4.200-2M5 4.700v5" fill="none" stroke="#e0e0e0" stroke-width="1"/><rect x="12" y="0.500" width="3.800" height="3.800" fill="#e0e0e0"/><rect x="12" y="5.700" width="3.800" height="3.800" fill="#e0e0e0"/><rect x="0.500" y="12.300" width="15.300" height="4" fill="#e0e0e0"/><path d="M11.200 13.300h3.600l-1.800 2.200z" fill="#444"/></svg>
<div class="a" style="left:1540px;top:116px;width:37px;height:1px;background:#3f3f3f;"></div>
<svg style="left:1552.8px;top:118.5px;" width="12.5" height="16" viewBox="0 0 12 16"><path d="M5.800 0.500h5.700v1.400h-1.200v13.600h-1.400v-13.600h-1.300v13.600h-1.400v-6.500h-.4a4.250 4.250 0 0 1 0-8.500z" fill="#e6e6e6"/></svg>
<div class="a" style="left:1540px;top:143px;width:37px;height:1px;background:#3f3f3f;"></div>
<div class="a" style="left:1577px;top:63px;width:3px;height:977px;background:#3f3f3f;"></div>
<div class="a" style="left:1580px;top:63px;width:340px;height:977px;background:#535353;"></div>
<div class="a" style="left:1580px;top:63px;width:340px;height:11px;background:#424242;"></div>
<div class="a" style="left:1580px;top:74px;width:340px;height:1px;background:#3a3a3a;"></div>
<div class="a" style="left:1919px;top:63px;width:1px;height:977px;background:#3a3a3a;"></div>
<svg style="left:1906px;top:66px;" width="7" height="5" viewBox="0 0 7 5"><path d="M0.200 0.100L2.900 2.500L0.200 4.900zM3.900 0.100L6.600 2.500L3.900 4.900z" fill="#d4d4d4"/></svg>
<div class="a" style="left:1580px;top:75px;width:340px;height:27px;background:#424242;"></div>
<div class="a" style="left:1580px;top:102px;width:340px;height:1px;background:#3d3d3d;"></div>
<div class="a" style="left:1580px;top:75px;width:42px;height:27px;background:#474747;"></div>
<div class="a" style="left:1622px;top:75px;width:1px;height:27px;background:#3c3c3c;"></div>
<div class="a" style="left:1623px;top:75px;width:63px;height:28px;background:#535353;"></div>
<div class="a" style="left:1686px;top:75px;width:1px;height:27px;background:#3c3c3c;"></div>
<div class="t" style="left:1589.50px;top:84px;font-size:10.5px;color:#a8a8a8;font-weight:bold;transform:scaleX(0.9263);transform-origin:0 0;">Цвет</div>
<div class="t" style="left:1632.00px;top:84px;font-size:10.5px;color:#f0f0f0;font-weight:bold;transform:scaleX(0.9439);transform-origin:0 0;">Образцы</div>
<svg style="left:1903px;top:85px;" width="10.3" height="8" viewBox="0 0 10.3 8"><path d="M0 0.500h10.300M0 2.550h10.300M0 4.600h10.300M0 6.650h10.300" stroke="#d0d0d0" stroke-width="1"/></svg>
<div class="a" style="left:1584px;top:111px;width:260px;height:19px;background:#4a4a4a;"></div>
<div class="a" style="left:1586px;top:113px;width:15px;height:15px;background:#4f9d1c;"></div>
<div class="a" style="left:1602px;top:113px;width:15px;height:15px;background:#ffffff;"></div>
<div class="a" style="left:1618px;top:113px;width:15px;height:15px;background:#ff0000;"></div>
<div class="a" style="left:1634px;top:113px;width:15px;height:15px;background:#9c9c9c;"></div>
<div class="a" style="left:1650px;top:113px;width:15px;height:15px;background:#363636;"></div>
<div class="a" style="left:1666px;top:113px;width:15px;height:15px;background:#000000;"></div>
<div class="a" style="left:1682px;top:113px;width:15px;height:15px;background:#00b0f0;"></div>
<div class="a" style="left:1698px;top:113px;width:15px;height:15px;background:#ef4a40;"></div>
<div class="a" style="left:1714px;top:113px;width:15px;height:15px;background:#ffffff;"></div>
<div class="a" style="left:1730px;top:113px;width:15px;height:15px;background:#00a75d;"></div>
<div class="a" style="left:1746px;top:113px;width:15px;height:15px;background:#000000;"></div>
<div class="a" style="left:1762px;top:113px;width:15px;height:15px;background:#00ffff;"></div>
<div class="a" style="left:1778px;top:113px;width:15px;height:15px;background:#00ffff;"></div>
<div class="a" style="left:1794px;top:113px;width:15px;height:15px;background:#ffffc8;"></div>
<div class="a" style="left:1810px;top:113px;width:15px;height:15px;background:#ffee2e;"></div>
<div class="a" style="left:1826px;top:113px;width:15px;height:15px;background:#c0c0c0;"></div>
<div class="a" style="left:1580px;top:134px;width:17px;height:17px;background:#ff0000;"></div>
<div class="a" style="left:1598px;top:134px;width:17px;height:17px;background:#ffff00;"></div>
<div class="a" style="left:1616px;top:134px;width:17px;height:17px;background:#00ff00;"></div>
<div class="a" style="left:1634px;top:134px;width:17px;height:17px;background:#00ffff;"></div>
<div class="a" style="left:1652px;top:134px;width:17px;height:17px;background:#0000ff;"></div>
<div class="a" style="left:1670px;top:134px;width:17px;height:17px;background:#ff00ff;"></div>
<div class="a" style="left:1688px;top:134px;width:17px;height:17px;background:#ffffff;"></div>
<div class="a" style="left:1706px;top:134px;width:17px;height:17px;background:#ebebeb;"></div>
<div class="a" style="left:1724px;top:134px;width:17px;height:17px;background:#e1e1e1;"></div>
<div class="a" style="left:1742px;top:134px;width:17px;height:17px;background:#d7d7d7;"></div>
<div class="a" style="left:1760px;top:134px;width:17px;height:17px;background:#cccccc;"></div>
<div class="a" style="left:1778px;top:134px;width:17px;height:17px;background:#c2c2c2;"></div>
<div class="a" style="left:1796px;top:134px;width:17px;height:17px;background:#b7b7b7;"></div>
<div class="a" style="left:1814px;top:134px;width:17px;height:17px;background:#acacac;"></div>
<div class="a" style="left:1832px;top:134px;width:17px;height:17px;background:#a0a0a0;"></div>
<div class="a" style="left:1850px;top:134px;width:17px;height:17px;background:#959595;"></div>
<div class="a" style="left:1868px;top:134px;width:17px;height:17px;background:#ef4a40;"></div>
<div class="a" style="left:1886px;top:134px;width:17px;height:17px;background:#ffee2e;"></div>
<div class="a" style="left:1580px;top:152px;width:17px;height:17px;background:#00a75d;"></div>
<div class="a" style="left:1598px;top:152px;width:17px;height:17px;background:#00b0f0;"></div>
<div class="a" style="left:1616px;top:152px;width:17px;height:17px;background:#4859a7;"></div>
<div class="a" style="left:1634px;top:152px;width:17px;height:17px;background:#f5549c;"></div>
<div class="a" style="left:1652px;top:152px;width:17px;height:17px;background:#7f7f7f;"></div>
<div class="a" style="left:1670px;top:152px;width:17px;height:17px;background:#717171;"></div>
<div class="a" style="left:1688px;top:152px;width:17px;height:17px;background:#636363;"></div>
<div class="a" style="left:1706px;top:152px;width:17px;height:17px;background:#555555;"></div>
<div class="a" style="left:1724px;top:152px;width:17px;height:17px;background:#464646;"></div>
<div class="a" style="left:1742px;top:152px;width:17px;height:17px;background:#3a3a3a;"></div>
<div class="a" style="left:1760px;top:152px;width:17px;height:17px;background:#2a2a2a;"></div>
<div class="a" style="left:1778px;top:152px;width:17px;height:17px;background:#1a1a1a;"></div>
<div class="a" style="left:1796px;top:152px;width:17px;height:17px;background:#0e0e0e;"></div>
<div class="a" style="left:1814px;top:152px;width:17px;height:17px;background:#000000;"></div>
<div class="a" style="left:1832px;top:152px;width:17px;height:17px;background:#f7977a;"></div>
<div class="a" style="left:1850px;top:152px;width:17px;height:17px;background:#f9ad81;"></div>
<div class="a" style="left:1868px;top:152px;width:17px;height:17px;background:#fdc68a;"></div>
<div class="a" style="left:1886px;top:152px;width:17px;height:17px;background:#fff79a;"></div>
<div class="a" style="left:1580px;top:170px;width:17px;height:17px;background:#c4df9b;"></div>
<div class="a" style="left:1598px;top:170px;width:17px;height:17px;background:#a2d39c;"></div>
<div class="a" style="left:1616px;top:170px;width:17px;height:17px;background:#82ca9d;"></div>
<div class="a" style="left:1634px;top:170px;width:17px;height:17px;background:#7bcdc8;"></div>
<div class="a" style="left:1652px;top:170px;width:17px;height:17px;background:#6ecff6;"></div>
<div class="a" style="left:1670px;top:170px;width:17px;height:17px;background:#7ea7d8;"></div>
<div class="a" style="left:1688px;top:170px;width:17px;height:17px;background:#8493ca;"></div>
<div class="a" style="left:1706px;top:170px;width:17px;height:17px;background:#8882be;"></div>
<div class="a" style="left:1724px;top:170px;width:17px;height:17px;background:#a187be;"></div>
<div class="a" style="left:1742px;top:170px;width:17px;height:17px;background:#bc8dbf;"></div>
<div class="a" style="left:1760px;top:170px;width:17px;height:17px;background:#f49ac2;"></div>
<div class="a" style="left:1778px;top:170px;width:17px;height:17px;background:#f6989d;"></div>
<div class="a" style="left:1796px;top:170px;width:17px;height:17px;background:#f26c4f;"></div>
<div class="a" style="left:1814px;top:170px;width:17px;height:17px;background:#f68e55;"></div>
<div class="a" style="left:1832px;top:170px;width:17px;height:17px;background:#fbaf5c;"></div>
<div class="a" style="left:1850px;top:170px;width:17px;height:17px;background:#fff467;"></div>
<div class="a" style="left:1868px;top:170px;width:17px;height:17px;background:#acd372;"></div>
<div class="a" style="left:1886px;top:170px;width:17px;height:17px;background:#7cc576;"></div>
<div class="a" style="left:1580px;top:188px;width:17px;height:17px;background:#4db981;"></div>
<div class="a" style="left:1598px;top:188px;width:17px;height:17px;background:#36bdb5;"></div>
<div class="a" style="left:1616px;top:188px;width:17px;height:17px;background:#00bff3;"></div>
<div class="a" style="left:1634px;top:188px;width:17px;height:17px;background:#548dca;"></div>
<div class="a" style="left:1652px;top:188px;width:17px;height:17px;background:#6175b9;"></div>
<div class="a" style="left:1670px;top:188px;width:17px;height:17px;background:#6a65ad;"></div>
<div class="a" style="left:1688px;top:188px;width:17px;height:17px;background:#8863ab;"></div>
<div class="a" style="left:1706px;top:188px;width:17px;height:17px;background:#a868ab;"></div>
<div class="a" style="left:1724px;top:188px;width:17px;height:17px;background:#f272ab;"></div>
<div class="a" style="left:1742px;top:188px;width:17px;height:17px;background:#f2727f;"></div>
<div class="a" style="left:1760px;top:188px;width:17px;height:17px;background:#ef4a40;"></div>
<div class="a" style="left:1778px;top:188px;width:17px;height:17px;background:#f36f3f;"></div>
<div class="a" style="left:1796px;top:188px;width:17px;height:17px;background:#f9953a;"></div>
<div class="a" style="left:1814px;top:188px;width:17px;height:17px;background:#ffee2e;"></div>
<div class="a" style="left:1832px;top:188px;width:17px;height:17px;background:#8bc751;"></div>
<div class="a" style="left:1850px;top:188px;width:17px;height:17px;background:#4db85c;"></div>
<div class="a" style="left:1868px;top:188px;width:17px;height:17px;background:#00a75d;"></div>
<div class="a" style="left:1886px;top:188px;width:17px;height:17px;background:#00ab9c;"></div>
<div class="a" style="left:1580px;top:206px;width:17px;height:17px;background:#00b0f0;"></div>
<div class="a" style="left:1598px;top:206px;width:17px;height:17px;background:#2a7cc4;"></div>
<div class="a" style="left:1616px;top:206px;width:17px;height:17px;background:#3f6db6;"></div>
<div class="a" style="left:1634px;top:206px;width:17px;height:17px;background:#4a5aa8;"></div>
<div class="a" style="left:1652px;top:206px;width:17px;height:17px;background:#6c58a5;"></div>
<div class="a" style="left:1670px;top:206px;width:17px;height:17px;background:#965aa6;"></div>
<div class="a" style="left:1688px;top:206px;width:17px;height:17px;background:#f5549c;"></div>
<div class="a" style="left:1706px;top:206px;width:17px;height:17px;background:#f4516f;"></div>
<div class="a" style="left:1724px;top:206px;width:17px;height:17px;background:#922d1c;"></div>
<div class="a" style="left:1742px;top:206px;width:17px;height:17px;background:#95461b;"></div>
<div class="a" style="left:1760px;top:206px;width:17px;height:17px;background:#985f19;"></div>
<div class="a" style="left:1778px;top:206px;width:17px;height:17px;background:#a8990d;"></div>
<div class="a" style="left:1796px;top:206px;width:17px;height:17px;background:#4a812e;"></div>
<div class="a" style="left:1814px;top:206px;width:17px;height:17px;background:#1f7a38;"></div>
<div class="a" style="left:1832px;top:206px;width:17px;height:17px;background:#00733c;"></div>
<div class="a" style="left:1850px;top:206px;width:17px;height:17px;background:#00756b;"></div>
<div class="a" style="left:1868px;top:206px;width:17px;height:17px;background:#0075a0;"></div>
<div class="a" style="left:1886px;top:206px;width:17px;height:17px;background:#144c82;"></div>
<div class="a" style="left:1580px;top:224px;width:17px;height:17px;background:#243d72;"></div>
<div class="a" style="left:1598px;top:224px;width:17px;height:17px;background:#2e306a;"></div>
<div class="a" style="left:1616px;top:224px;width:17px;height:17px;background:#433268;"></div>
<div class="a" style="left:1634px;top:224px;width:17px;height:17px;background:#5e3266;"></div>
<div class="a" style="left:1652px;top:224px;width:17px;height:17px;background:#973560;"></div>
<div class="a" style="left:1670px;top:224px;width:17px;height:17px;background:#962c3c;"></div>
<div class="a" style="left:1688px;top:224px;width:17px;height:17px;background:#711500;"></div>
<div class="a" style="left:1706px;top:224px;width:17px;height:17px;background:#752f00;"></div>
<div class="a" style="left:1724px;top:224px;width:17px;height:17px;background:#774600;"></div>
<div class="a" style="left:1742px;top:224px;width:17px;height:17px;background:#7c7400;"></div>
<div class="a" style="left:1760px;top:224px;width:17px;height:17px;background:#2c5d10;"></div>
<div class="a" style="left:1778px;top:224px;width:17px;height:17px;background:#045514;"></div>
<div class="a" style="left:1796px;top:224px;width:17px;height:17px;background:#04551c;"></div>
<div class="a" style="left:1814px;top:224px;width:17px;height:17px;background:#03564d;"></div>
<div class="a" style="left:1832px;top:224px;width:17px;height:17px;background:#00597b;"></div>
<div class="a" style="left:1850px;top:224px;width:17px;height:17px;background:#05365f;"></div>
<div class="a" style="left:1868px;top:224px;width:17px;height:17px;background:#0e2b59;"></div>
<div class="a" style="left:1886px;top:224px;width:17px;height:17px;background:#1d1c53;"></div>
<div class="a" style="left:1580px;top:242px;width:17px;height:5.5px;background:#381c50;"></div>
<div class="a" style="left:1598px;top:242px;width:17px;height:5.5px;background:#4f1c4f;"></div>
<div class="a" style="left:1616px;top:242px;width:17px;height:5.5px;background:#7d1c48;"></div>
<div class="a" style="left:1634px;top:242px;width:17px;height:5.5px;background:#7c1b24;"></div>
<div class="a" style="left:1652px;top:242px;width:17px;height:5.5px;background:#c8ab8e;"></div>
<div class="a" style="left:1670px;top:242px;width:17px;height:5.5px;background:#9b8775;"></div>
<div class="a" style="left:1688px;top:242px;width:17px;height:5.5px;background:#746359;"></div>
<div class="a" style="left:1706px;top:242px;width:17px;height:5.5px;background:#544842;"></div>
<div class="a" style="left:1724px;top:242px;width:17px;height:5.5px;background:#363836;"></div>
<div class="a" style="left:1742px;top:242px;width:17px;height:5.5px;background:#c79d6e;"></div>
<div class="a" style="left:1760px;top:242px;width:17px;height:5.5px;background:#a67b52;"></div>
<div class="a" style="left:1778px;top:242px;width:17px;height:5.5px;background:#8d623a;"></div>
<div class="a" style="left:1796px;top:242px;width:17px;height:5.5px;background:#764c25;"></div>
<div class="a" style="left:1814px;top:242px;width:17px;height:5.5px;background:#623a17;"></div>
<div class="a" style="left:1904px;top:134px;width:16px;height:114px;background:#4d4d4d;"></div>
<svg style="left:1907.7px;top:142px;" width="8" height="5" viewBox="0 0 8 5"><path d="M0.500 4.500L4 1L7.500 4.500" fill="none" stroke="#9c9c9c" stroke-width="1"/></svg>
<svg style="left:1907.7px;top:236px;" width="8" height="5" viewBox="0 0 8 5"><path d="M0.500 0.500L4 4L7.500 0.500" fill="none" stroke="#9c9c9c" stroke-width="1"/></svg>
<div class="a" style="left:1906.5px;top:151.5px;width:10px;height:63.5px;background:#6a6a6a;"></div>
<svg style="left:1851px;top:256px;" width="11" height="11" viewBox="0 0 11 11"><path d="M1 0.700h9.300v9.600h-5.800l-3.500-3.500z" fill="none" stroke="#d6d6d6" stroke-width="1.400"/><path d="M1 6.800h3.500v3.500" fill="none" stroke="#d6d6d6" stroke-width="1.200"/></svg>
<svg style="left:1879px;top:255.5px;" width="11" height="12" viewBox="0 0 11 12"><path d="M0.300 2.300h10.400M3.800 2.300v-1.500h3.400v1.500" fill="none" stroke="#8c8c8c" stroke-width="1.200"/><path d="M1.500 3.500h8v8h-8z" fill="none" stroke="#8c8c8c" stroke-width="1.200"/><path d="M4 5v5M5.500 5v5M7 5v5" stroke="#8c8c8c" stroke-width="0.900"/></svg>
<div class="a" style="left:1580px;top:272px;width:340px;height:4px;background:#3f3f3f;"></div>
<div class="a" style="left:1580px;top:276px;width:340px;height:27px;background:#424242;"></div>
<div class="a" style="left:1580px;top:303px;width:340px;height:1px;background:#3d3d3d;"></div>
<div class="a" style="left:1580px;top:276px;width:48px;height:28px;background:#535353;"></div>
<div class="a" style="left:1628px;top:276px;width:1px;height:27px;background:#3c3c3c;"></div>
<div class="a" style="left:1629px;top:276px;width:72px;height:27px;background:#474747;"></div>
<div class="a" style="left:1701px;top:276px;width:1px;height:27px;background:#3c3c3c;"></div>
<div class="t" style="left:1589.00px;top:285px;font-size:10.5px;color:#f0f0f0;font-weight:bold;transform:scaleX(0.9132);transform-origin:0 0;">Стили</div>
<div class="t" style="left:1637.50px;top:285px;font-size:10.5px;color:#a8a8a8;font-weight:bold;transform:scaleX(0.9681);transform-origin:0 0;">Коррекция</div>
<svg style="left:1903px;top:286px;" width="10.3" height="8" viewBox="0 0 10.3 8"><path d="M0 0.500h10.300M0 2.550h10.300M0 4.600h10.300M0 6.650h10.300" stroke="#d0d0d0" stroke-width="1"/></svg>
<div class="a" style="left:1580px;top:308px;width:32px;height:32px;background:#4a4a4a;"></div>
<div class="a" style="left:1579px;top:307px;width:33px;height:33px;border:1px solid #4c4c4c"></div>
<div class="a" style="left:1611px;top:307px;width:33px;height:33px;border:1px solid #4c4c4c"></div>
<div class="a" style="left:1643px;top:307px;width:33px;height:33px;border:1px solid #4c4c4c"></div>
<div class="a" style="left:1675px;top:307px;width:33px;height:33px;border:1px solid #4c4c4c"></div>
<div class="a" style="left:1707px;top:307px;width:33px;height:33px;border:1px solid #4c4c4c"></div>
<div class="a" style="left:1739px;top:307px;width:33px;height:33px;border:1px solid #4c4c4c"></div>
<div class="a" style="left:1771px;top:307px;width:33px;height:33px;border:1px solid #4c4c4c"></div>
<div class="a" style="left:1803px;top:307px;width:33px;height:33px;border:1px solid #4c4c4c"></div>
<div class="a" style="left:1835px;top:307px;width:33px;height:33px;border:1px solid #4c4c4c"></div>
<div class="a" style="left:1867px;top:307px;width:33px;height:33px;border:1px solid #4c4c4c"></div>
<div class="a" style="left:1579px;top:339px;width:33px;height:33px;border:1px solid #4c4c4c"></div>
<div class="a" style="left:1611px;top:339px;width:33px;height:33px;border:1px solid #4c4c4c"></div>
<div class="a" style="left:1643px;top:339px;width:33px;height:33px;border:1px solid #4c4c4c"></div>
<div class="a" style="left:1675px;top:339px;width:33px;height:33px;border:1px solid #4c4c4c"></div>
<div class="a" style="left:1707px;top:339px;width:33px;height:33px;border:1px solid #4c4c4c"></div>
<div class="a" style="left:1739px;top:339px;width:33px;height:33px;border:1px solid #4c4c4c"></div>
<div class="a" style="left:1771px;top:339px;width:33px;height:33px;border:1px solid #4c4c4c"></div>
<div class="a" style="left:1803px;top:339px;width:33px;height:33px;border:1px solid #4c4c4c"></div>
<div class="a" style="left:1835px;top:339px;width:33px;height:33px;border:1px solid #4c4c4c"></div>
<div class="a" style="left:1867px;top:339px;width:33px;height:33px;border:1px solid #4c4c4c"></div>
<div class="a" style="left:1579px;top:371px;width:33px;height:33px;border:1px solid #4c4c4c"></div>
<div class="a" style="left:1611px;top:371px;width:33px;height:33px;border:1px solid #4c4c4c"></div>
<div class="a" style="left:1643px;top:371px;width:33px;height:33px;border:1px solid #4c4c4c"></div>
<div class="a" style="left:1675px;top:371px;width:33px;height:33px;border:1px solid #4c4c4c"></div>
<div class="a" style="left:1707px;top:371px;width:33px;height:33px;border:1px solid #4c4c4c"></div>
<div class="a" style="left:1739px;top:371px;width:33px;height:33px;border:1px solid #4c4c4c"></div>
<div class="a" style="left:1771px;top:371px;width:33px;height:33px;border:1px solid #4c4c4c"></div>
<div class="a" style="left:1803px;top:371px;width:33px;height:33px;border:1px solid #4c4c4c"></div>
<div class="a" style="left:1587px;top:316px;width:17px;height:17px;background:#fff;border:1px solid #000"><svg style="left:-4px;top:-4px" width="23" height="23"><path d="M0.500 0.500L22.500 22.500" stroke="#c41616" stroke-width="2.200"/></svg></div>
<div class="a" style="left:1620px;top:317px;width:15px;height:15px;background:#5a5a5a;box-shadow:0 3px 4px rgba(0,0,0,.3);border-radius:1px"></div>
<div class="a" style="left:1652px;top:317px;width:15px;height:15px;background:linear-gradient(#34d4f4,#14bfee)"></div>
<div class="a" style="left:1684px;top:317px;width:15px;height:15px;background:radial-gradient(circle,#0a4a66 0 0.800px,#bff4fc 1.500px,#2ccdf0 7px);box-shadow:inset 0 0 0 1px #0e8fb5,inset 0 0 2px 1px #0aa"></div>
<div class="a" style="left:1716px;top:317px;width:15px;height:15px;background:radial-gradient(circle,#0a6a96 0 0.800px,#7fdcf8 1.500px,#ffffff 8px)"></div>
<div class="a" style="left:1748px;top:317px;width:15px;height:15px;background:linear-gradient(rgba(255,255,255,0) 20%,#fff 85%),linear-gradient(90deg,#ff4040,#ffb000,#60e000,#00b0ff,#b040ff,#ff40a0)"></div>
<div class="a" style="left:1780px;top:317px;width:15px;height:15px;background:linear-gradient(90deg,#ff2020,#ff9000 18%,#f0f000 32%,#20d020 48%,#2060ff 64%,#a020e0 80%,#ff2080)"></div>
<div class="a" style="left:1812px;top:317px;width:15px;height:15px;background:linear-gradient(#fff 0,rgba(255,255,255,0) 45%,rgba(0,0,0,0) 55%,#000 100%),linear-gradient(90deg,#ff0000,#ffff00,#00ff00,#00ffff,#0000ff,#ff00ff)"></div>
<div class="a" style="left:1844px;top:317px;width:15px;height:15px;background:linear-gradient(135deg,#ffffff 10%,#ff2020 50%,#000 90%)"></div>
<div class="a" style="left:1876px;top:317px;width:15px;height:15px;background:#575757;border-bottom:1px solid #484848"></div>
<div class="a" style="left:1588px;top:349px;width:15px;height:15px;background:#575757;border:1px solid #3e3e3e;border-radius:2px"></div>
<div class="a" style="left:1620px;top:349px;width:15px;height:15px;background:#5c5c5c;border:1px solid #444;border-radius:2px"></div>
<div class="a" style="left:1652px;top:349px;width:15px;height:15px;background:radial-gradient(circle,#ffe020 0,#ff2010 32%,#d00040 50%,#1010c0 80%);border-radius:2px;box-shadow:inset 0 0 0 1px #101060"></div>
<div class="a" style="left:1681px;top:345.5px;width:21px;height:21px;border:2px solid #d6d6b4;border-radius:3px;background:#585858;box-shadow:0 0 0 1px #8a8a70"></div>
<div class="a" style="left:1716px;top:349px;width:15px;height:15px;background:radial-gradient(circle at 50% 30%,#aaa 0,#555 35%,#111 70%);border-radius:2px"></div>
<div class="a" style="left:1748px;top:349px;width:15px;height:15px;background:linear-gradient(160deg,#e8f6ff 0,#58b4f0 30%,#0a6ad0 60%,#2a9ae8 100%);box-shadow:inset 0 0 0 1px #0858a8"></div>
<div class="a" style="left:1780px;top:349px;width:15px;height:15px;background:#b4b4b4"></div>
<div class="a" style="left:1812px;top:349px;width:15px;height:15px;background:linear-gradient(#222 0,#999 20%,#111 30%,#ddd 45%,#333 55%,#888 75%,#ddd 90%,#444 100%)"></div>
<div class="a" style="left:1844px;top:349px;width:15px;height:15px;background:#83682e"></div>
<div class="a" style="left:1876px;top:349px;width:15px;height:15px;background:linear-gradient(#4a3208,#8a6a2e 50%,#b49a66)"></div>
<div class="a" style="left:1588px;top:381px;width:15px;height:15px;background:linear-gradient(#2a1a9a 0 15%,#e82838 25% 45%,#b81828 55%,#e83848 65%,#3a1a9a 80%,#1a0a6a)"></div>
<div class="a" style="left:1620px;top:381px;width:15px;height:15px;background:conic-gradient(from 40deg,#e8d020,#d01860,#2028c0,#101010,#e82020,#20b0e0,#e8d020)"></div>
<div class="a" style="left:1652px;top:381px;width:15px;height:15px;background:radial-gradient(circle,#f8e020 0,#f0a000 50%,#e06000 100%);box-shadow:inset 0 0 0 1px #c86000"></div>
<div class="a" style="left:1684px;top:381px;width:15px;height:15px;background:linear-gradient(165deg,#e8a020 0,#60b040 30%,#2080c0 55%,#4090a0 80%,#607040)"></div>
<div class="a" style="left:1716px;top:381px;width:15px;height:15px;background:linear-gradient(#1a90e0,#90ccf4 55%,#ffffff)"></div>
<div class="a" style="left:1748px;top:381px;width:15px;height:15px;background:linear-gradient(#2060c0 0,#50a8e8 35%,#101820 48%,#e8a020 58%,#f8d040 75%,#d88010 100%)"></div>
<div class="a" style="left:1780px;top:381px;width:15px;height:15px;background:repeating-conic-gradient(#f4f4f4 0 12deg,#9a9a9a 12deg 20deg,#e0e0e0 20deg 31deg,#777 31deg 37deg);opacity:.9"></div>
<div class="a" style="left:1812px;top:381px;width:15px;height:15px;background:linear-gradient(#d86080 0,#e87090 12%,#4838b0 28%,#5848c0 45%,#e86888 60%,#d05878 78%,#201020 92%)"></div>
<svg style="left:1819px;top:411px;" width="12" height="12" viewBox="0 0 12 12"><circle cx="6" cy="6" r="5" fill="none" stroke="#b4b4b4" stroke-width="1.300"/><path d="M2.500 2.500L9.500 9.500" stroke="#b4b4b4" stroke-width="1.300"/></svg>
<svg style="left:1851px;top:411px;" width="11" height="11" viewBox="0 0 11 11"><path d="M1 0.700h9.300v9.600h-5.800l-3.500-3.500z" fill="none" stroke="#a4a4a4" stroke-width="1.400"/><path d="M1 6.800h3.500v3.500" fill="none" stroke="#a4a4a4" stroke-width="1.200"/></svg>
<svg style="left:1879px;top:410.5px;" width="11" height="12" viewBox="0 0 11 12"><path d="M0.300 2.300h10.400M3.800 2.300v-1.500h3.400v1.500" fill="none" stroke="#8c8c8c" stroke-width="1.200"/><path d="M1.500 3.500h8v8h-8z" fill="none" stroke="#8c8c8c" stroke-width="1.200"/><path d="M4 5v5M5.500 5v5M7 5v5" stroke="#8c8c8c" stroke-width="0.900"/></svg>
<div class="a" style="left:1580px;top:428px;width:340px;height:4px;background:#3f3f3f;"></div>
<div class="a" style="left:1580px;top:432px;width:340px;height:27px;background:#424242;"></div>
<div class="a" style="left:1580px;top:459px;width:340px;height:1px;background:#3d3d3d;"></div>
<div class="a" style="left:1580px;top:432px;width:43.5px;height:28px;background:#535353;"></div>
<div class="a" style="left:1623.5px;top:432px;width:1px;height:27px;background:#3c3c3c;"></div>
<div class="a" style="left:1624.5px;top:432px;width:54px;height:27px;background:#474747;"></div>
<div class="a" style="left:1678.5px;top:432px;width:1px;height:27px;background:#3c3c3c;"></div>
<div class="a" style="left:1679.5px;top:432px;width:61.5px;height:27px;background:#474747;"></div>
<div class="a" style="left:1741px;top:432px;width:1px;height:27px;background:#3c3c3c;"></div>
<div class="t" style="left:1589.00px;top:441px;font-size:10.5px;color:#f4f4f4;font-weight:bold;transform:scaleX(0.9080);transform-origin:0 0;">Слои</div>
<div class="t" style="left:1632.50px;top:441px;font-size:10.5px;color:#a8a8a8;font-weight:bold;transform:scaleX(0.9080);transform-origin:0 0;">Каналы</div>
<div class="t" style="left:1688.30px;top:441px;font-size:10.5px;color:#a8a8a8;font-weight:bold;transform:scaleX(0.9353);transform-origin:0 0;">Контуры</div>
<svg style="left:1903px;top:442px;" width="10.3" height="8" viewBox="0 0 10.3 8"><path d="M0 0.500h10.300M0 2.550h10.300M0 4.600h10.300M0 6.650h10.300" stroke="#d0d0d0" stroke-width="1"/></svg>
<div class="a" style="left:1583px;top:468px;width:125px;height:19px;background:#464646;border:1px solid #5f5f5f;border-radius:2px"></div>
<svg style="left:1591px;top:472px;" width="12" height="11" viewBox="0 0 12 11"><circle cx="7" cy="4.300" r="3.400" fill="none" stroke="#d0d0d0" stroke-width="1.400"/><path d="M4.600 6.800L1 10.200" stroke="#d0d0d0" stroke-width="1.800" stroke-linecap="round"/></svg>
<div class="t" style="left:1606.00px;top:474px;font-size:10px;color:#ececec;transform:scaleX(0.9673);transform-origin:0 0;">Вид</div>
<svg style="left:1696.5px;top:476px;" width="8" height="5" viewBox="0 0 8 5"><path d="M0.500 0.500L4 4L7.5 0.500" fill="none" stroke="#c8c8c8" stroke-width="1.100"/></svg>
<svg style="left:1751.8px;top:472px;" width="12.2" height="10.2" viewBox="0 0 13 11"><rect x="0.600" y="0.600" width="11.800" height="9.800" fill="none" stroke="#dcdcdc" stroke-width="1.200"/><path d="M2.200 8.600l2.600-3.600l2 2.400l1.600-1.600l2.400 2.800z" fill="#dcdcdc"/></svg>
<svg style="left:1776.8px;top:472px;" width="11.2" height="11.2" viewBox="0 0 12 12"><circle cx="6" cy="6" r="5.200" fill="none" stroke="#dcdcdc" stroke-width="1.200"/><path d="M9.700 2.300A5.200 5.200 0 0 1 2.300 9.700z" fill="#dcdcdc"/></svg>
<svg style="left:1801.8px;top:472.6px;" width="10.3" height="9.4" viewBox="0 0 11 10"><path d="M0.300 0.300h10.400v3h-.9l-.5-1.700h-2.600v7.200l1.500.4v.8h-5.400v-.8l1.500-.4v-7.200h-2.600l-.5 1.700h-.9z" fill="#e0e0e0"/></svg>
<svg style="left:1824.8px;top:472px;" width="11.2" height="11" viewBox="0 0 12 12"><rect x="1.500" y="1.500" width="9" height="9" fill="none" stroke="#dcdcdc" stroke-width="1.200"/><rect x="0" y="0" width="3" height="3" fill="#dcdcdc"/><rect x="9" y="0" width="3" height="3" fill="#dcdcdc"/><rect x="0" y="9" width="3" height="3" fill="#dcdcdc"/><rect x="9" y="9" width="3" height="3" fill="#dcdcdc"/></svg>
<svg style="left:1849.9px;top:472px;" width="10.3" height="11.4" viewBox="0 0 11 12"><path d="M3.600 0.600h4l2.800 2.800v6.200h-6.800z" fill="none" stroke="#dcdcdc" stroke-width="1.200"/><rect x="0.300" y="5.800" width="5.800" height="5.800" fill="#dcdcdc"/></svg>
<div class="a" style="left:1906.500px;top:469px;width:9.500px;height:18px;border-radius:5px;background:#484848;border:1px solid #404040"></div>
<div class="a" style="left:1907px;top:469px;width:8.500px;height:8.500px;border-radius:50%;background:#e0e0e0"></div>
<div class="a" style="left:1580px;top:491px;width:340px;height:1px;background:#4d4d4d;"></div>
<div class="a" style="left:1580px;top:518px;width:340px;height:1px;background:#4d4d4d;"></div>
<div class="a" style="left:1583px;top:496px;width:190.500px;height:18px;background:#464646;border:1px solid #5f5f5f;border-radius:2px"></div>
<div class="t" style="left:1592.00px;top:501px;font-size:10px;color:#ececec;transform:scaleX(1.0360);transform-origin:0 0;">Пропустить</div>
<svg style="left:1762px;top:503px;" width="8" height="5" viewBox="0 0 8 5"><path d="M0.500 0.500L4 4L7.5 0.500" fill="none" stroke="#c8c8c8" stroke-width="1.100"/></svg>
<div class="t" style="left:1780.30px;top:501px;font-size:10px;color:#cfcfcf;">Непрозрачность:</div>
<div class="t" style="left:1868.50px;top:501px;font-size:10px;color:#f0f0f0;transform:scaleX(0.9384);transform-origin:0 0;">100%</div>
<div class="a" style="left:1863px;top:512px;width:53px;height:1px;background:#6c6c6c;"></div>
<svg style="left:1905.5px;top:503px;" width="8" height="5" viewBox="0 0 8 5"><path d="M0.500 0.500L4 4L7.5 0.500" fill="none" stroke="#c8c8c8" stroke-width="1.100"/></svg>
<div class="t" style="left:1586.00px;top:528px;font-size:10px;color:#cfcfcf;">Закрепить:</div>
<svg style="left:1647px;top:526px;" width="11.2" height="11.2" viewBox="0 0 11.2 11.2"><rect x="0" y="0" width="11.200" height="11.200" fill="#969696"/><path d="M1.200 1.200h2.800v2.800h-2.800zM7.200 1.200h2.800v2.800h-2.800zM4.200 4.200h2.800v2.800h-2.800zM1.200 7.200h2.800v2.800h-2.800zM7.200 7.200h2.800v2.800h-2.800z" fill="#585858"/></svg>
<svg style="left:1668px;top:525.5px;" width="13.5" height="13.5" viewBox="0 0 13.5 13.5"><path d="M12.300 1L7 7.600" stroke="#9a9a9a" stroke-width="2.100" stroke-linecap="round"/><path d="M0.300 13C1.300 12.200 1.500 10.600 2.500 9.200C3.500 7.900 5.400 7.600 6.500 8.600C7.500 9.700 7.200 11.500 5.800 12.500C4.200 13.600 1.700 13.400 0.300 13z" fill="#9a9a9a"/></svg>
<svg style="left:1690px;top:525px;" width="13" height="13.2" viewBox="0 0 13 13.2"><path d="M6.500 2.200v8.800M2.200 6.600h8.600" stroke="#9a9a9a" stroke-width="1.500"/><path d="M6.500 0l2.500 3h-5zM6.500 13.200l2.500-3h-5zM0 6.600l3-2.500v5zM13 6.600l-3-2.500v5z" fill="#9a9a9a"/></svg>
<svg style="left:1711.5px;top:525.5px;" width="14.5" height="13" viewBox="0 0 14.5 13"><path d="M2.700 3h6.600l2.700 2.700v4.300h-9.300z" fill="none" stroke="#e4e4e4" stroke-width="1.300"/><path d="M9.300 3v2.700h2.700" fill="none" stroke="#e4e4e4" stroke-width="1"/><path d="M2.700 0.300v1.800M12 0.300v1.800M0 3h1.800M0 10h1.800M2.700 10.900v1.800M12 10.900v1.800M12.900 10h1.600M12.900 3.200h1.600" stroke="#e4e4e4" stroke-width="1.100"/></svg>
<svg style="left:1736px;top:526px;" width="10" height="12.2" viewBox="0 0 10 12.2"><rect x="0" y="4.400" width="10" height="7.800" rx="0.800" fill="#e4e4e4"/><path d="M2.300 5v-2a2.700 2.700 0 0 1 5.400 0v2" fill="none" stroke="#e4e4e4" stroke-width="1.500"/><rect x="4.200" y="7.400" width="1.600" height="1.800" fill="#535353"/></svg>
<div class="t" style="left:1819.00px;top:528px;font-size:10px;color:#cfcfcf;transform:scaleX(0.9692);transform-origin:0 0;">Заливка:</div>
<div class="t" style="left:1868.50px;top:528px;font-size:10px;color:#f0f0f0;transform:scaleX(0.9384);transform-origin:0 0;">100%</div>
<div class="a" style="left:1863px;top:539px;width:53px;height:1px;background:#6c6c6c;"></div>
<svg style="left:1905.5px;top:530px;" width="8" height="5" viewBox="0 0 8 5"><path d="M0.500 0.500L4 4L7.5 0.500" fill="none" stroke="#c8c8c8" stroke-width="1.100"/></svg>
<div class="a" style="left:1580px;top:546px;width:340px;height:469px;background:#4d4d4d;"></div>
<div class="a" style="left:1580px;top:546px;width:324px;height:249px;background:#474747;"></div>
<div class="a" style="left:1580px;top:547px;width:30px;height:22px;background:#ba950f;"></div>
<div class="a" style="left:1610px;top:547px;width:294px;height:22px;background:#6b6b6b;"></div>
<svg style="left:1587.5px;top:554px;" width="15" height="9" viewBox="0 0 15 9"><path d="M0.300 4.500C2.500 1.300 5 0.300 7.500 0.300S12.500 1.300 14.700 4.500C12.500 7.700 10 8.700 7.500 8.700S2.500 7.700 0.300 4.500z" fill="#f6f6f6"/><circle cx="7.500" cy="4.500" r="2.700" fill="#ba950f"/><circle cx="8.400" cy="3.600" r="0.900" fill="#f6f6f6"/></svg>
<svg style="left:1613px;top:554.5px;" width="8.5" height="5" viewBox="0 0 8.5 5"><path d="M0.500 0.500L4.25 4L8 0.500" fill="none" stroke="#c4c4c4" stroke-width="1.100"/></svg>
<svg style="left:1625.5px;top:552.5px;" width="15" height="11" viewBox="0 0 15 11"><path d="M0.600 10.400v-9.800h5l1.200 1.800h7.600v8z" fill="none" stroke="#e0e0e0" stroke-width="1.200"/><path d="M0.600 4.600h13.800v5.800h-13.800z" fill="#e0e0e0"/></svg>
<div class="t" style="left:1653.00px;top:556px;font-size:10px;color:#f0f0f0;">Header</div>
<div class="a" style="left:1580px;top:570px;width:30px;height:22px;background:#ba950f;"></div>
<div class="a" style="left:1610px;top:570px;width:294px;height:22px;background:#535353;"></div>
<svg style="left:1587.5px;top:577px;" width="15" height="9" viewBox="0 0 15 9"><path d="M0.300 4.500C2.500 1.300 5 0.300 7.500 0.300S12.500 1.300 14.700 4.500C12.500 7.700 10 8.700 7.500 8.700S2.500 7.700 0.300 4.500z" fill="#f6f6f6"/><circle cx="7.500" cy="4.500" r="2.700" fill="#ba950f"/><circle cx="8.400" cy="3.600" r="0.900" fill="#f6f6f6"/></svg>
<svg style="left:1629px;top:577.5px;" width="8.5" height="5" viewBox="0 0 8.5 5"><path d="M0.500 0.500L4.25 4L8 0.500" fill="none" stroke="#c4c4c4" stroke-width="1.100"/></svg>
<svg style="left:1641.5px;top:575.5px;" width="15" height="11" viewBox="0 0 15 11"><path d="M0.600 10.400v-9.800h5l1.200 1.800h7.600v8z" fill="none" stroke="#e0e0e0" stroke-width="1.200"/><path d="M0.600 4.600h13.800v5.800h-13.800z" fill="#e0e0e0"/></svg>
<div class="t" style="left:1669.00px;top:579px;font-size:10px;color:#f0f0f0;transform:scaleX(0.9794);transform-origin:0 0;">Menu</div>
<div class="a" style="left:1580px;top:593px;width:30px;height:38px;background:#bd413e;"></div>
<div class="a" style="left:1610px;top:593px;width:294px;height:38px;background:#535353;"></div>
<svg style="left:1587.5px;top:608px;" width="15" height="9" viewBox="0 0 15 9"><path d="M0.300 4.500C2.500 1.300 5 0.300 7.500 0.300S12.500 1.300 14.700 4.500C12.500 7.700 10 8.700 7.500 8.700S2.500 7.700 0.300 4.500z" fill="#f6f6f6"/><circle cx="7.500" cy="4.500" r="2.700" fill="#bd413e"/><circle cx="8.400" cy="3.600" r="0.900" fill="#f6f6f6"/></svg>
<svg style="left:1655px;top:605px;" width="14" height="14" viewBox="0 0 14 14"><path d="M0.500 0.500h13v3.600h-.9l-.6-2.300h-3.900v10.700l2 .4v.8h-6.200v-.8l2-.4v-10.700h-3.900l-.6 2.300h-.9z" fill="#e6e6e6"/></svg>
<div class="t" style="left:1688.00px;top:610px;font-size:10px;color:#f0f0f0;transform:scaleX(0.9247);transform-origin:0 0;">FAQ</div>
<div class="a" style="left:1580px;top:632px;width:30px;height:38px;background:#bd413e;"></div>
<div class="a" style="left:1610px;top:632px;width:294px;height:38px;background:#535353;"></div>
<svg style="left:1587.5px;top:647px;" width="15" height="9" viewBox="0 0 15 9"><path d="M0.300 4.500C2.500 1.300 5 0.300 7.500 0.300S12.500 1.300 14.700 4.500C12.500 7.700 10 8.700 7.500 8.700S2.500 7.700 0.300 4.500z" fill="#f6f6f6"/><circle cx="7.500" cy="4.500" r="2.700" fill="#bd413e"/><circle cx="8.400" cy="3.600" r="0.900" fill="#f6f6f6"/></svg>
<svg style="left:1655px;top:644px;" width="14" height="14" viewBox="0 0 14 14"><path d="M0.500 0.500h13v3.600h-.9l-.6-2.300h-3.900v10.700l2 .4v.8h-6.200v-.8l2-.4v-10.700h-3.900l-.6 2.300h-.9z" fill="#e6e6e6"/></svg>
<div class="t" style="left:1688.00px;top:649px;font-size:10px;color:#f0f0f0;">Trades</div>
<div class="a" style="left:1580px;top:671px;width:30px;height:38px;background:#bd413e;"></div>
<div class="a" style="left:1610px;top:671px;width:294px;height:38px;background:#535353;"></div>
<svg style="left:1587.5px;top:686px;" width="15" height="9" viewBox="0 0 15 9"><path d="M0.300 4.500C2.500 1.300 5 0.300 7.500 0.300S12.500 1.300 14.700 4.500C12.500 7.700 10 8.700 7.500 8.700S2.500 7.700 0.300 4.500z" fill="#f6f6f6"/><circle cx="7.500" cy="4.500" r="2.700" fill="#bd413e"/><circle cx="8.400" cy="3.600" r="0.900" fill="#f6f6f6"/></svg>
<svg style="left:1655px;top:683px;" width="14" height="14" viewBox="0 0 14 14"><path d="M0.500 0.500h13v3.600h-.9l-.6-2.300h-3.900v10.700l2 .4v.8h-6.200v-.8l2-.4v-10.700h-3.900l-.6 2.300h-.9z" fill="#e6e6e6"/></svg>
<div class="t" style="left:1688.00px;top:688px;font-size:10px;color:#f0f0f0;transform:scaleX(0.9559);transform-origin:0 0;">Home</div>
<div class="a" style="left:1580px;top:710px;width:30px;height:38px;background:#bd413e;"></div>
<div class="a" style="left:1610px;top:710px;width:294px;height:38px;background:#535353;"></div>
<svg style="left:1587.5px;top:725px;" width="15" height="9" viewBox="0 0 15 9"><path d="M0.300 4.500C2.500 1.300 5 0.300 7.500 0.300S12.500 1.300 14.700 4.500C12.500 7.700 10 8.700 7.500 8.700S2.500 7.700 0.300 4.500z" fill="#f6f6f6"/><circle cx="7.500" cy="4.500" r="2.700" fill="#bd413e"/><circle cx="8.400" cy="3.600" r="0.900" fill="#f6f6f6"/></svg>
<svg style="left:1655px;top:722px;" width="14" height="14" viewBox="0 0 14 14"><path d="M0.500 0.500h13v3.600h-.9l-.6-2.300h-3.900v10.700l2 .4v.8h-6.200v-.8l2-.4v-10.700h-3.900l-.6 2.300h-.9z" fill="#e6e6e6"/></svg>
<div class="t" style="left:1688.00px;top:727px;font-size:10px;color:#f0f0f0;transform:scaleX(0.9842);transform-origin:0 0;">Logotype</div>
<div class="a" style="left:1580px;top:749px;width:30px;height:22px;background:#bd413e;"></div>
<div class="a" style="left:1610px;top:749px;width:294px;height:22px;background:#535353;"></div>
<svg style="left:1587.5px;top:756px;" width="15" height="9" viewBox="0 0 15 9"><path d="M0.300 4.500C2.500 1.300 5 0.300 7.500 0.300S12.500 1.300 14.700 4.500C12.500 7.700 10 8.700 7.500 8.700S2.500 7.700 0.300 4.500z" fill="#f6f6f6"/><circle cx="7.500" cy="4.500" r="2.700" fill="#bd413e"/><circle cx="8.400" cy="3.600" r="0.900" fill="#f6f6f6"/></svg>
<svg style="left:1614.8px;top:754.8px;" width="5" height="9" viewBox="0 0 5 9"><path d="M0.600 0.600L4.200 4.500L0.600 8.400" fill="none" stroke="#c4c4c4" stroke-width="1.100"/></svg>
<svg style="left:1625.5px;top:754.5px;" width="15" height="11" viewBox="0 0 15 11"><path d="M0 11v-11h5.800l1.200 1.800h8v9.200z" fill="#e0e0e0"/><path d="M0.800 2.600h13" stroke="#7a7a7a" stroke-width="0.600"/></svg>
<div class="t" style="left:1653.00px;top:758px;font-size:10px;color:#f0f0f0;">Body</div>
<div class="a" style="left:1580px;top:772px;width:30px;height:22px;background:#4b6dad;"></div>
<div class="a" style="left:1610px;top:772px;width:294px;height:22px;background:#535353;"></div>
<svg style="left:1587.5px;top:779px;" width="15" height="9" viewBox="0 0 15 9"><path d="M0.300 4.500C2.500 1.300 5 0.300 7.500 0.300S12.500 1.300 14.700 4.500C12.500 7.700 10 8.700 7.500 8.700S2.500 7.700 0.300 4.500z" fill="#f6f6f6"/><circle cx="7.500" cy="4.500" r="2.700" fill="#4b6dad"/><circle cx="8.400" cy="3.600" r="0.900" fill="#f6f6f6"/></svg>
<svg style="left:1613px;top:779.5px;" width="8.5" height="5" viewBox="0 0 8.5 5"><path d="M0.500 0.500L4.25 4L8 0.500" fill="none" stroke="#c4c4c4" stroke-width="1.100"/></svg>
<svg style="left:1625.5px;top:777.5px;" width="15" height="11" viewBox="0 0 15 11"><path d="M0.600 10.400v-9.800h5l1.200 1.800h7.600v8z" fill="none" stroke="#e0e0e0" stroke-width="1.200"/><path d="M0.600 4.600h13.800v5.800h-13.800z" fill="#e0e0e0"/></svg>
<div class="t" style="left:1653.00px;top:781px;font-size:10px;color:#f0f0f0;transform:scaleX(0.9342);transform-origin:0 0;">Footer</div>
<svg style="left:1716px;top:1023px;" width="14" height="8" viewBox="0 0 14 8"><path d="M5.500 1h-2a3 3 0 0 0 0 6h2M8.500 1h2a3 3 0 0 1 0 6h-2M4.500 4h5" fill="none" stroke="#8a8a8a" stroke-width="1.200"/></svg>
<div class="t" style="left:1744.50px;top:1021px;font-size:13.5px;color:#e0e0e0;transform:scaleX(1.0952);transform-origin:0 0;font-style:italic;">fx</div>
<svg style="left:1757.5px;top:1035px;" width="4" height="3" viewBox="0 0 4 3"><path d="M0 0h4l-2 2.500z" fill="#e0e0e0"/></svg>
<svg style="left:1770px;top:1021px;" width="13" height="11" viewBox="0 0 13 11"><rect x="0" y="0" width="13" height="11" rx="1" fill="#dcdcdc"/><circle cx="6.500" cy="5.500" r="3" fill="#535353"/></svg>
<svg style="left:1798.5px;top:1021px;" width="12" height="12" viewBox="0 0 12 12"><circle cx="6" cy="6" r="5.200" fill="none" stroke="#dcdcdc" stroke-width="1.200"/><path d="M9.700 2.300A5.200 5.200 0 0 1 2.300 9.700z" fill="#dcdcdc"/></svg>
<svg style="left:1811.5px;top:1035px;" width="4" height="3" viewBox="0 0 4 3"><path d="M0 0h4l-2 2.500z" fill="#e0e0e0"/></svg>
<svg style="left:1824.5px;top:1021px;" width="13" height="11" viewBox="0 0 13 11"><path d="M0 11v-11h5l1.200 1.800h6.800v9.200z" fill="#dcdcdc"/></svg>
<svg style="left:1851.5px;top:1021px;" width="11" height="11" viewBox="0 0 11 11"><path d="M1 0.700h9.300v9.600h-5.800l-3.500-3.500z" fill="none" stroke="#dcdcdc" stroke-width="1.400"/><path d="M1 6.800h3.500v3.500" fill="none" stroke="#dcdcdc" stroke-width="1.200"/></svg>
<svg style="left:1878.5px;top:1020.5px;" width="11" height="12" viewBox="0 0 11 12"><path d="M0.300 2.300h10.400M3.800 2.300v-1.500h3.400v1.500" fill="none" stroke="#dcdcdc" stroke-width="1.200"/><path d="M1.500 3.500h8v8h-8z" fill="none" stroke="#dcdcdc" stroke-width="1.200"/><path d="M4 5v5M5.500 5v5M7 5v5" stroke="#dcdcdc" stroke-width="0.900"/></svg>
<div class="a" style="left:0;top:1040px;width:1920px;height:40px;background:linear-gradient(rgba(0,0,0,0) 40%,rgba(0,0,0,.35)),linear-gradient(90deg,#090909 0,#090909 330px,#151515 380px,#141414 470px,#0c0c0c 520px,#0a0a09 700px,#0c0c0b 800px,#161616 870px,#161616 1040px,#131413 1200px,#0d0d0c 1290px,#0b0b0a 1500px,#0c0b0a 1920px)"></div>
<svg style="left:16px;top:1052px;" width="16" height="16" viewBox="0 0 16 16"><path d="M0 2.300L6.600 1.400V7.600H0zM7.400 1.300L16 0V7.600H7.400zM0 8.400H6.600V14.600L0 13.700zM7.400 8.400H16V16L7.400 14.700z" fill="#ffffff"/></svg>
<svg style="left:62px;top:1053px;" width="20" height="14" viewBox="0 0 20 14"><rect x="4.700" y="0.700" width="10.600" height="12.600" fill="none" stroke="#fff" stroke-width="1.400"/><path d="M2.800 2.500h-2.100v9h2.100M17.200 2.500h2.100v9h-2.100" fill="none" stroke="#fff" stroke-width="1.300"/></svg>
<svg style="left:112px;top:1051px;" width="22" height="18" viewBox="0 0 22 18"><path d="M0.500 1.500h8l1.500 2h11.500v14h-21z" fill="#f3cf63"/><path d="M0.500 4.500h21v13h-21z" fill="#fbe08a"/><path d="M4.500 10.500h13v7.500h-13z" fill="#3aa0e8"/><path d="M7.500 14h7v4h-7z" fill="#fbe08a"/><path d="M1.500 2.500h3" stroke="#c89a28" stroke-width="0.800"/></svg>
<div class="a" style="left:160.500px;top:1048.500px;width:23px;height:23px;border-radius:50%;background:#f1f1f1"></div>
<svg style="left:166px;top:1053.5px;" width="12" height="14" viewBox="0 0 12 14"><path d="M1.300 1.300L6 6.800L10.700 1.300M6 6.800V12.800" fill="none" stroke="#ee1c25" stroke-width="2.300" stroke-linecap="round" stroke-linejoin="round"/></svg>
<div class="a" style="left:210px;top:1049px;width:22px;height:22px;border-radius:50%;background:linear-gradient(160deg,#15294a 20%,#1b5a9c 70%,#2a86c8)"></div>
<svg style="left:210px;top:1049px;" width="22" height="22" viewBox="0 0 22 22"><circle cx="14.600" cy="8.300" r="3.600" fill="none" stroke="#e4e8ee" stroke-width="1.500"/><circle cx="14.600" cy="8.300" r="1.700" fill="#c8ccd4"/><path d="M0.800 11.500l6 3l4.800-3.300" fill="none" stroke="#e4e8ee" stroke-width="2.200" stroke-linecap="round"/><circle cx="6.700" cy="15" r="2.700" fill="#1a3a6a" stroke="#e4e8ee" stroke-width="1.300"/></svg>
<div class="a" style="left:246px;top:1040px;width:48px;height:40px;background:#383838;"></div>
<div class="a" style="left:259px;top:1048px;width:21.500px;height:21.500px;background:#0a1c2a;border:2px solid #2ab0e0"></div>
<div class="t" style="left:263.50px;top:1052px;font-size:14px;color:#35c0f0;transform:scaleX(0.7651);transform-origin:0 0;">Ps</div>
<svg style="left:310.5px;top:1049.5px;" width="18" height="21" viewBox="0 0 18 21"><path d="M2 0h14a2 2 0 0 1 2 2v18.500l-3.400-3.200h-12.600a2 2 0 0 1-2-2v-13.300a2 2 0 0 1 2-2z" fill="#6f86d0"/><path d="M4 6.500c1.500-1 3-1.300 5-1.300s3.500.3 5 1.300c1 2 1.500 4 1.500 6.300c-1 .9-2 1.300-3.200 1.500l-.7-1.200h-5.200l-.7 1.200c-1.200-.2-2.200-.6-3.200-1.500c0-2.300.5-4.300 1.500-6.300z" fill="#fff"/><ellipse cx="6.800" cy="10" rx="1.300" ry="1.500" fill="#6f86d0"/><ellipse cx="11.200" cy="10" rx="1.300" ry="1.500" fill="#6f86d0"/></svg>
<div class="a" style="left:152px;top:1078px;width:40px;height:2px;background:#76b9ed;"></div>
<div class="a" style="left:201px;top:1078px;width:40px;height:2px;background:#76b9ed;"></div>
<div class="a" style="left:246px;top:1078px;width:48px;height:2px;background:#76b9ed;"></div>
<div class="a" style="left:299px;top:1078px;width:40px;height:2px;background:#76b9ed;"></div>
<div class="a" style="left:234px;top:1078px;width:7px;height:2px;background:#5c8fb8;"></div>
<svg style="left:1722.5px;top:1056px;" width="12" height="8" viewBox="0 0 12 8"><path d="M0.800 7L6 1.500L11.200 7" fill="none" stroke="#fff" stroke-width="1.300"/></svg>
<svg style="left:1745px;top:1052px;" width="17" height="15" viewBox="0 0 17 15"><path d="M0.700 5.200h3l3.600-3.500v11.600l-3.600-3.500h-3z" fill="none" stroke="#fff" stroke-width="1.100"/><path d="M9.300 5.300a3 3 0 0 1 0 4.400M11.300 3.500a5.600 5.600 0 0 1 0 8M13.300 1.800a8 8 0 0 1 0 11.400" fill="none" stroke="#fff" stroke-width="1"/></svg>
<div class="t" style="left:1772.50px;top:1054px;font-size:12px;color:#ffffff;transform:scaleX(0.8947);transform-origin:0 0;">РУС</div>
<div class="t" style="left:1820.50px;top:1044px;font-size:12px;color:#ffffff;transform:scaleX(0.8991);transform-origin:0 0;">14:18</div>
<div class="t" style="left:1807.00px;top:1062px;font-size:12px;color:#ffffff;transform:scaleX(0.8991);transform-origin:0 0;">05.01.2017</div>
<svg style="left:1878.5px;top:1052px;" width="18" height="16" viewBox="0 0 18 16"><path d="M0.700 0.700h15.600v11h-3.800v3.300l-3.300-3.300h-8.500z" fill="none" stroke="#fff" stroke-width="1.300"/><circle cx="14.800" cy="13" r="2.600" fill="#0b0c0b" stroke="#fff" stroke-width="0.900"/></svg>
<div class="a" style="left:1915px;top:1040px;width:1px;height:40px;background:#4c4c4c;"></div>
</div>
</body>
</html>
